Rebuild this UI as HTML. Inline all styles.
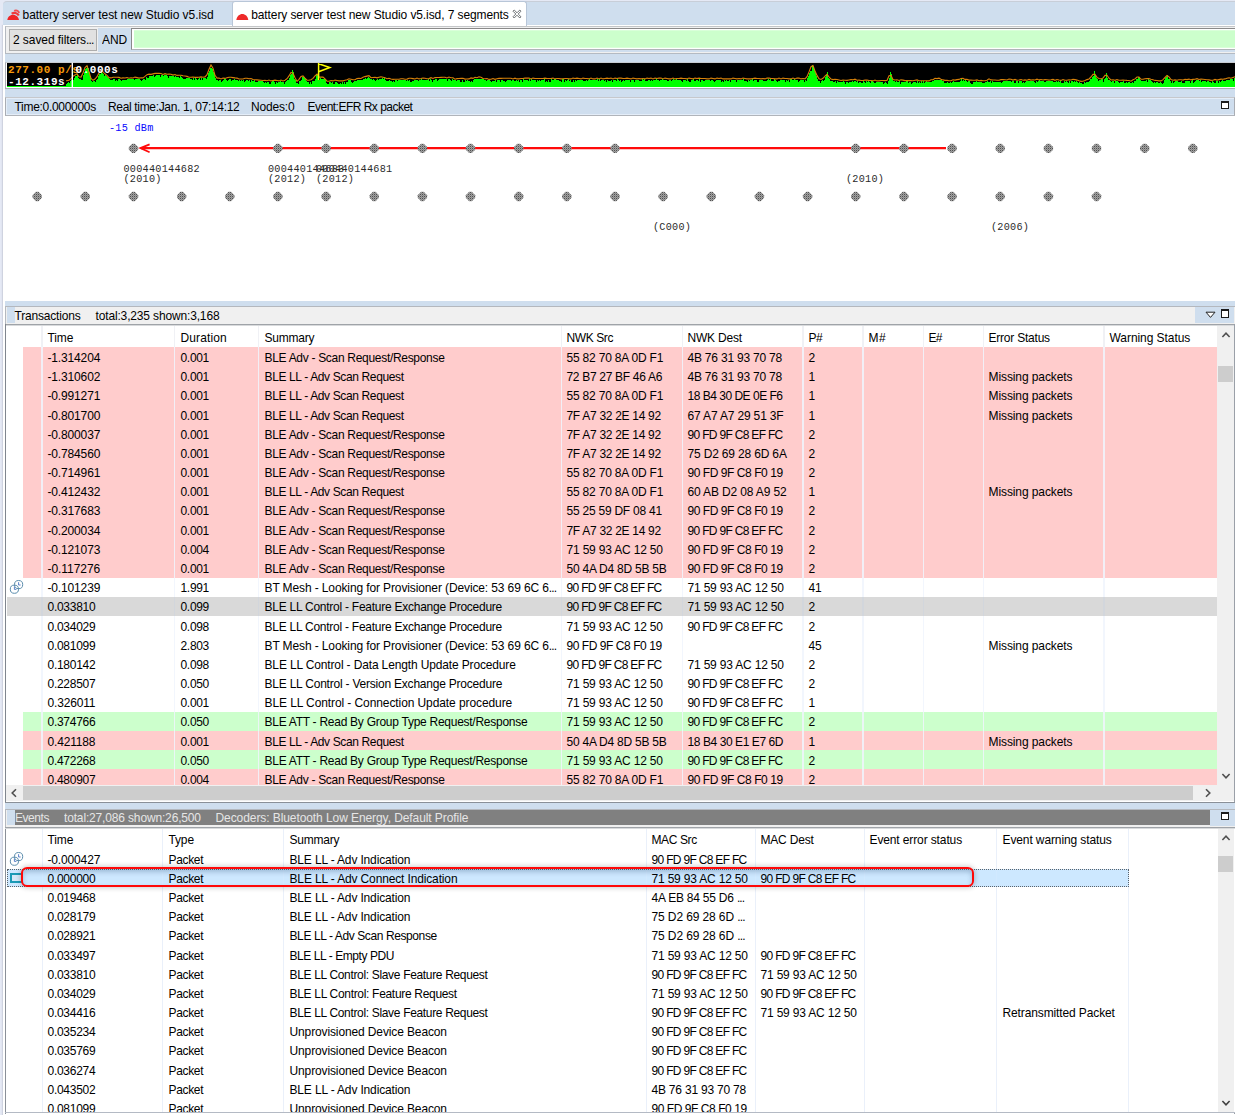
<!DOCTYPE html>
<html><head><meta charset="utf-8"><title>Network Analyzer</title>
<style>
*{box-sizing:border-box}
html,body{margin:0;padding:0}
body{width:1235px;height:1115px;position:relative;overflow:hidden;background:#e5e9f5;
 font-family:"Liberation Sans",sans-serif;font-size:12px;color:#000;}
.a{position:absolute}
.t{position:absolute;white-space:nowrap;line-height:16px;height:16px;transform:scaleY(1.05);transform-origin:0 50%}
.m{position:absolute;white-space:nowrap;font-family:"Liberation Mono",monospace;font-size:10.2px;letter-spacing:0.25px;line-height:10px;color:#2a2a2a}
.sep{position:absolute;width:1px;background:#fff}
.sepw{position:absolute;width:1px;background:#ecf2fb}
</style></head>
<body>
<div class="a" style="left:3px;top:1px;width:1232px;height:24.5px;background:#cfdeee;border-top-left-radius:4px;border-top:1px solid #c8ced8"></div>
<div class="a" style="left:2.5px;top:25px;width:1233px;height:1090px;background:#fff;box-shadow:-1px 0 1px rgba(120,125,140,0.2)"></div>
<div class="a" style="left:5px;top:27px;width:1230px;height:89px;background:#cfdeee;"></div>
<div class="a" style="left:232.3px;top:1.3px;width:295.2px;height:25px;background:#fff;border-radius:3px 3px 0 0;border:1px solid #b8c6d8;border-bottom:none"></div>
<svg class="a" style="left:7px;top:9px" width="14" height="12" viewBox="0 0 14 12"><path d="M0.3 11 C0.6 8 3 5.7 6 5.7 C9 5.7 11.6 8 12 11 Z" fill="#ee2628"/><path d="M4.6 4.6 C7 3.2 10.2 3.6 11.8 6.6" fill="none" stroke="#ef3a3c" stroke-width="2.2"/><path d="M7.2 1.9 C9 1 11.2 1.6 12.2 3.8" fill="none" stroke="#f04e50" stroke-width="1.9"/></svg>
<div class="t" style="left:22.6px;top:6.60px;letter-spacing:-0.067px;">battery server test new Studio v5.isd</div>
<svg class="a" style="left:235.8px;top:9px" width="14" height="12" viewBox="0 0 14 12"><path d="M0.3 11 C0.8 7.2 3.5 5 6.3 5 C9.1 5 11.8 7.2 12.3 11 Z" fill="#ee2a2a"/></svg>
<div class="t" style="left:251.2px;top:6.60px;letter-spacing:-0.093px;">battery server test new Studio v5.isd, 7 segments</div>
<svg class="a" style="left:512.3px;top:8.6px" width="10" height="10" viewBox="-1 -1 10 10"><path d="M0 1.2 L1.2 0 L4 2.8 L6.8 0 L8 1.2 L5.2 4 L8 6.8 L6.8 8 L4 5.2 L1.2 8 L0 6.8 L2.8 4 Z" stroke="#606468" stroke-width="0.9" fill="#fff"/></svg>
<div class="a" style="left:5px;top:26px;width:1230px;height:27.6px;background:#f0f0f0;border:1px solid #b4b9c0;border-right:none;border-top-color:#c4c6c8;border-bottom-color:#b4bac2"></div>
<div class="a" style="left:98px;top:28px;width:1137px;height:23.8px;background:#cfdeee;"></div>
<div class="a" style="left:9px;top:29.2px;width:87.6px;height:21.4px;background:#e1e1e1;border:1px solid #adadad"></div>
<div class="t" style="left:13px;top:32.40px;letter-spacing:-0.067px;">2 saved filters<span style="letter-spacing:-0.85px">...</span></div>
<div class="t" style="left:102px;top:32.40px;letter-spacing:-0.071px;">AND</div>
<div class="a" style="left:131.3px;top:28.3px;width:1104px;height:22.2px;background:#ccffcc;border:1px solid #8a8a8a;border-bottom-color:#b0b4b8;border-right:none;box-shadow:inset 2px 1.3px 0 #fff, inset 0 -1.3px 0 #fff"></div>
<div class="a" style="left:5px;top:61.5px;width:1230px;height:27.2px;background:#fff;border:1px solid #a8acb4;border-right:none;border-top-color:#c8ccd2"></div>
<div class="a" style="left:7px;top:62.6px;width:1228px;height:24.4px;background:#000;"></div>
<svg class="a" style="left:0;top:0" width="1235" height="90" viewBox="0 0 1235 90"><path d="M7 87 L7 83.9 L8 83.9 L8 83.4 L9 83.4 L9 84.2 L10 84.2 L10 82.9 L11 82.9 L11 83.2 L12 83.2 L12 85.4 L13 85.4 L13 83.2 L14 83.2 L14 83.9 L15 83.9 L15 82.9 L16 82.9 L16 85.4 L17 85.4 L17 83.6 L18 83.6 L18 82.9 L19 82.9 L19 83.2 L20 83.2 L20 84.2 L21 84.2 L21 84.2 L22 84.2 L22 83.2 L23 83.2 L23 83.6 L24 83.6 L24 83.2 L25 83.2 L25 85.4 L26 85.4 L26 84.2 L27 84.2 L27 82.9 L28 82.9 L28 83.2 L29 83.2 L29 83.6 L30 83.6 L30 82.9 L31 82.9 L31 84.2 L32 84.2 L32 82.9 L33 82.9 L33 83.6 L34 83.6 L34 82.9 L35 82.9 L35 85.4 L36 85.4 L36 83.4 L37 83.4 L37 83.6 L38 83.6 L38 84.2 L39 84.2 L39 83.4 L40 83.4 L40 85.4 L41 85.4 L41 83.2 L42 83.2 L42 83.6 L43 83.6 L43 85.4 L44 85.4 L44 83.4 L45 83.4 L45 83.2 L46 83.2 L46 83.6 L47 83.6 L47 83.9 L48 83.9 L48 83.2 L49 83.2 L49 85.4 L50 85.4 L50 83.2 L51 83.2 L51 82.9 L52 82.9 L52 83.6 L53 83.6 L53 84.8 L54 84.8 L54 85.4 L55 85.4 L55 84.2 L56 84.2 L56 83.9 L57 83.9 L57 84.8 L58 84.8 L58 84.8 L59 84.8 L59 83.9 L60 83.9 L60 83.6 L61 83.6 L61 83.3 L62 83.3 L62 82.9 L63 82.9 L63 82.8 L64 82.8 L64 82.2 L65 82.2 L65 82.3 L66 82.3 L66 83.9 L67 83.9 L67 83.0 L68 83.0 L68 81.9 L69 81.9 L69 82.5 L70 82.5 L70 81.1 L71 81.1 L71 79.5 L72 79.5 L72 78.3 L73 78.3 L73 79.5 L74 79.5 L74 77.5 L75 77.5 L75 75.9 L76 75.9 L76 75.9 L77 75.9 L77 73.9 L78 73.9 L78 77.8 L79 77.8 L79 78.7 L80 78.7 L80 78.5 L81 78.5 L81 80.0 L82 80.0 L82 79.5 L83 79.5 L83 75.4 L84 75.4 L84 72.4 L85 72.4 L85 69.4 L86 69.4 L86 67.6 L87 67.6 L87 65.8 L88 65.8 L88 68.4 L89 68.4 L89 72.0 L90 72.0 L90 77.1 L91 77.1 L91 81.0 L92 81.0 L92 82.0 L93 82.0 L93 81.2 L94 81.2 L94 81.4 L95 81.4 L95 82.1 L96 82.1 L96 79.7 L97 79.7 L97 78.5 L98 78.5 L98 76.4 L99 76.4 L99 73.8 L100 73.8 L100 74.2 L101 74.2 L101 71.7 L102 71.7 L102 72.5 L103 72.5 L103 73.7 L104 73.7 L104 76.0 L105 76.0 L105 74.7 L106 74.7 L106 76.1 L107 76.1 L107 77.3 L108 77.3 L108 78.4 L109 78.4 L109 78.8 L110 78.8 L110 79.7 L111 79.7 L111 79.7 L112 79.7 L112 80.4 L113 80.4 L113 78.8 L114 78.8 L114 79.0 L115 79.0 L115 80.5 L116 80.5 L116 79.9 L117 79.9 L117 81.1 L118 81.1 L118 79.4 L119 79.4 L119 79.2 L120 79.2 L120 80.0 L121 80.0 L121 81.3 L122 81.3 L122 79.5 L123 79.5 L123 80.1 L124 80.1 L124 79.9 L125 79.9 L125 80.2 L126 80.2 L126 79.5 L127 79.5 L127 79.3 L128 79.3 L128 79.0 L129 79.0 L129 79.2 L130 79.2 L130 79.1 L131 79.1 L131 79.3 L132 79.3 L132 79.2 L133 79.2 L133 78.5 L134 78.5 L134 80.3 L135 80.3 L135 78.9 L136 78.9 L136 79.1 L137 79.1 L137 79.2 L138 79.2 L138 78.5 L139 78.5 L139 79.1 L140 79.1 L140 79.9 L141 79.9 L141 81.2 L142 81.2 L142 79.7 L143 79.7 L143 79.4 L144 79.4 L144 78.7 L145 78.7 L145 80.4 L146 80.4 L146 77.0 L147 77.0 L147 77.9 L148 77.9 L148 77.6 L149 77.6 L149 76.3 L150 76.3 L150 76.3 L151 76.3 L151 76.2 L152 76.2 L152 76.1 L153 76.1 L153 75.1 L154 75.1 L154 76.6 L155 76.6 L155 76.0 L156 76.0 L156 74.7 L157 74.7 L157 75.4 L158 75.4 L158 75.0 L159 75.0 L159 75.4 L160 75.4 L160 76.6 L161 76.6 L161 75.3 L162 75.3 L162 75.1 L163 75.1 L163 75.9 L164 75.9 L164 75.0 L165 75.0 L165 75.3 L166 75.3 L166 75.1 L167 75.1 L167 75.7 L168 75.7 L168 77.8 L169 77.8 L169 75.6 L170 75.6 L170 76.4 L171 76.4 L171 75.5 L172 75.5 L172 75.8 L173 75.8 L173 76.3 L174 76.3 L174 77.0 L175 77.0 L175 76.3 L176 76.3 L176 76.5 L177 76.5 L177 76.9 L178 76.9 L178 77.0 L179 77.0 L179 78.0 L180 78.0 L180 76.4 L181 76.4 L181 76.5 L182 76.5 L182 78.2 L183 78.2 L183 78.5 L184 78.5 L184 78.9 L185 78.9 L185 79.2 L186 79.2 L186 78.4 L187 78.4 L187 78.0 L188 78.0 L188 78.2 L189 78.2 L189 78.1 L190 78.1 L190 78.8 L191 78.8 L191 78.5 L192 78.5 L192 79.7 L193 79.7 L193 78.4 L194 78.4 L194 80.4 L195 80.4 L195 77.9 L196 77.9 L196 78.6 L197 78.6 L197 80.4 L198 80.4 L198 78.8 L199 78.8 L199 78.3 L200 78.3 L200 80.3 L201 80.3 L201 77.8 L202 77.8 L202 80.3 L203 80.3 L203 78.4 L204 78.4 L204 78.0 L205 78.0 L205 78.4 L206 78.4 L206 79.3 L207 79.3 L207 76.9 L208 76.9 L208 73.4 L209 73.4 L209 70.9 L210 70.9 L210 68.2 L211 68.2 L211 67.7 L212 67.7 L212 68.6 L213 68.6 L213 71.8 L214 71.8 L214 74.0 L215 74.0 L215 78.0 L216 78.0 L216 80.1 L217 80.1 L217 80.1 L218 80.1 L218 80.7 L219 80.7 L219 80.1 L220 80.1 L220 80.1 L221 80.1 L221 81.9 L222 81.9 L222 81.3 L223 81.3 L223 80.4 L224 80.4 L224 79.4 L225 79.4 L225 79.4 L226 79.4 L226 79.9 L227 79.9 L227 80.9 L228 80.9 L228 79.5 L229 79.5 L229 79.3 L230 79.3 L230 79.4 L231 79.4 L231 80.5 L232 80.5 L232 79.7 L233 79.7 L233 79.9 L234 79.9 L234 79.4 L235 79.4 L235 79.9 L236 79.9 L236 79.7 L237 79.7 L237 80.1 L238 80.1 L238 81.3 L239 81.3 L239 80.2 L240 80.2 L240 80.5 L241 80.5 L241 80.2 L242 80.2 L242 81.4 L243 81.4 L243 79.5 L244 79.5 L244 81.5 L245 81.5 L245 80.6 L246 80.6 L246 79.9 L247 79.9 L247 79.9 L248 79.9 L248 81.0 L249 81.0 L249 80.4 L250 80.4 L250 81.6 L251 81.6 L251 80.3 L252 80.3 L252 81.2 L253 81.2 L253 81.0 L254 81.0 L254 80.4 L255 80.4 L255 81.5 L256 81.5 L256 82.2 L257 82.2 L257 81.7 L258 81.7 L258 80.8 L259 80.8 L259 81.1 L260 81.1 L260 81.2 L261 81.2 L261 81.3 L262 81.3 L262 80.9 L263 80.9 L263 81.5 L264 81.5 L264 82.9 L265 82.9 L265 81.6 L266 81.6 L266 83.0 L267 83.0 L267 82.2 L268 82.2 L268 81.8 L269 81.8 L269 83.8 L270 83.8 L270 83.9 L271 83.9 L271 81.9 L272 81.9 L272 81.4 L273 81.4 L273 81.4 L274 81.4 L274 81.7 L275 81.7 L275 83.9 L276 83.9 L276 81.9 L277 81.9 L277 82.7 L278 82.7 L278 82.1 L279 82.1 L279 82.1 L280 82.1 L280 81.4 L281 81.4 L281 82.1 L282 82.1 L282 82.1 L283 82.1 L283 82.1 L284 82.1 L284 83.9 L285 83.9 L285 82.1 L286 82.1 L286 81.4 L287 81.4 L287 80.1 L288 80.1 L288 80.4 L289 80.4 L289 77.7 L290 77.7 L290 75.4 L291 75.4 L291 73.7 L292 73.7 L292 70.0 L293 70.0 L293 72.3 L294 72.3 L294 78.9 L295 78.9 L295 80.2 L296 80.2 L296 83.4 L297 83.4 L297 83.4 L298 83.4 L298 84.1 L299 84.1 L299 80.7 L300 80.7 L300 81.4 L301 81.4 L301 80.3 L302 80.3 L302 76.6 L303 76.6 L303 77.4 L304 77.4 L304 77.6 L305 77.6 L305 78.6 L306 78.6 L306 80.5 L307 80.5 L307 81.8 L308 81.8 L308 82.3 L309 82.3 L309 83.5 L310 83.5 L310 81.6 L311 81.6 L311 83.6 L312 83.6 L312 80.9 L313 80.9 L313 80.7 L314 80.7 L314 81.0 L315 81.0 L315 79.4 L316 79.4 L316 73.9 L317 73.9 L317 73.7 L318 73.7 L318 76.8 L319 76.8 L319 80.2 L320 80.2 L320 78.4 L321 78.4 L321 79.1 L322 79.1 L322 79.1 L323 79.1 L323 79.1 L324 79.1 L324 78.4 L325 78.4 L325 80.0 L326 80.0 L326 83.4 L327 83.4 L327 84.1 L328 84.1 L328 84.4 L329 84.4 L329 81.7 L330 81.7 L330 81.7 L331 81.7 L331 83.3 L332 83.3 L332 82.4 L333 82.4 L333 83.9 L334 83.9 L334 83.9 L335 83.9 L335 82.1 L336 82.1 L336 82.1 L337 82.1 L337 83.3 L338 83.3 L338 83.9 L339 83.9 L339 83.9 L340 83.9 L340 83.3 L341 83.3 L341 83.9 L342 83.9 L342 82.1 L343 82.1 L343 83.9 L344 83.9 L344 82.1 L345 82.1 L345 83.9 L346 83.9 L346 81.5 L347 81.5 L347 82.0 L348 82.0 L348 80.0 L349 80.0 L349 80.2 L350 80.2 L350 79.9 L351 79.9 L351 81.5 L352 81.5 L352 82.8 L353 82.8 L353 81.7 L354 81.7 L354 80.8 L355 80.8 L355 81.0 L356 81.0 L356 81.4 L357 81.4 L357 80.2 L358 80.2 L358 80.4 L359 80.4 L359 80.2 L360 80.2 L360 79.6 L361 79.6 L361 79.5 L362 79.5 L362 79.8 L363 79.8 L363 79.1 L364 79.1 L364 79.1 L365 79.1 L365 78.4 L366 78.4 L366 79.4 L367 79.4 L367 77.7 L368 77.7 L368 76.8 L369 76.8 L369 78.0 L370 78.0 L370 79.3 L371 79.3 L371 78.7 L372 78.7 L372 79.6 L373 79.6 L373 79.3 L374 79.3 L374 80.0 L375 80.0 L375 81.1 L376 81.1 L376 79.8 L377 79.8 L377 79.4 L378 79.4 L378 79.6 L379 79.6 L379 78.9 L380 78.9 L380 79.1 L381 79.1 L381 79.0 L382 79.0 L382 78.2 L383 78.2 L383 79.1 L384 79.1 L384 78.4 L385 78.4 L385 79.6 L386 79.6 L386 81.4 L387 81.4 L387 81.0 L388 81.0 L388 81.3 L389 81.3 L389 79.6 L390 79.6 L390 81.2 L391 81.2 L391 80.9 L392 80.9 L392 82.4 L393 82.4 L393 80.5 L394 80.5 L394 82.3 L395 82.3 L395 80.1 L396 80.1 L396 80.1 L397 80.1 L397 80.5 L398 80.5 L398 80.1 L399 80.1 L399 80.0 L400 80.0 L400 80.4 L401 80.4 L401 80.4 L402 80.4 L402 79.7 L403 79.7 L403 80.2 L404 80.2 L404 80.4 L405 80.4 L405 80.1 L406 80.1 L406 80.9 L407 80.9 L407 80.3 L408 80.3 L408 80.9 L409 80.9 L409 80.1 L410 80.1 L410 82.1 L411 82.1 L411 82.0 L412 82.0 L412 81.4 L413 81.4 L413 80.5 L414 80.5 L414 79.8 L415 79.8 L415 80.2 L416 80.2 L416 79.5 L417 79.5 L417 79.9 L418 79.9 L418 80.7 L419 80.7 L419 79.7 L420 79.7 L420 80.1 L421 80.1 L421 79.4 L422 79.4 L422 79.6 L423 79.6 L423 80.0 L424 80.0 L424 79.6 L425 79.6 L425 79.9 L426 79.9 L426 79.5 L427 79.5 L427 79.9 L428 79.9 L428 79.4 L429 79.4 L429 81.0 L430 81.0 L430 79.1 L431 79.1 L431 80.0 L432 80.0 L432 81.5 L433 81.5 L433 80.3 L434 80.3 L434 79.6 L435 79.6 L435 79.4 L436 79.4 L436 78.9 L437 78.9 L437 81.3 L438 81.3 L438 79.5 L439 79.5 L439 79.1 L440 79.1 L440 79.2 L441 79.2 L441 79.4 L442 79.4 L442 78.7 L443 78.7 L443 79.1 L444 79.1 L444 79.3 L445 79.3 L445 79.3 L446 79.3 L446 79.2 L447 79.2 L447 81.0 L448 81.0 L448 79.2 L449 79.2 L449 79.1 L450 79.1 L450 80.3 L451 80.3 L451 81.1 L452 81.1 L452 79.4 L453 79.4 L453 79.8 L454 79.8 L454 80.4 L455 80.4 L455 79.6 L456 79.6 L456 80.6 L457 80.6 L457 79.9 L458 79.9 L458 79.8 L459 79.8 L459 79.8 L460 79.8 L460 82.3 L461 82.3 L461 82.2 L462 82.2 L462 80.4 L463 80.4 L463 82.1 L464 82.1 L464 81.5 L465 81.5 L465 80.3 L466 80.3 L466 81.4 L467 81.4 L467 79.8 L468 79.8 L468 80.8 L469 80.8 L469 81.3 L470 81.3 L470 81.9 L471 81.9 L471 80.5 L472 80.5 L472 81.6 L473 81.6 L473 79.6 L474 79.6 L474 79.4 L475 79.4 L475 79.3 L476 79.3 L476 79.4 L477 79.4 L477 78.9 L478 78.9 L478 78.6 L479 78.6 L479 79.2 L480 79.2 L480 79.2 L481 79.2 L481 78.5 L482 78.5 L482 79.3 L483 79.3 L483 79.0 L484 79.0 L484 79.6 L485 79.6 L485 80.3 L486 80.3 L486 81.2 L487 81.2 L487 80.4 L488 80.4 L488 79.9 L489 79.9 L489 80.2 L490 80.2 L490 81.1 L491 81.1 L491 82.3 L492 82.3 L492 80.5 L493 80.5 L493 80.5 L494 80.5 L494 80.5 L495 80.5 L495 79.8 L496 79.8 L496 81.7 L497 81.7 L497 80.2 L498 80.2 L498 80.2 L499 80.2 L499 80.4 L500 80.4 L500 81.6 L501 81.6 L501 79.7 L502 79.7 L502 80.4 L503 80.4 L503 80.6 L504 80.6 L504 80.6 L505 80.6 L505 82.1 L506 82.1 L506 80.6 L507 80.6 L507 80.3 L508 80.3 L508 79.6 L509 79.6 L509 80.3 L510 80.3 L510 80.2 L511 80.2 L511 80.5 L512 80.5 L512 80.0 L513 80.0 L513 79.5 L514 79.5 L514 80.5 L515 80.5 L515 80.8 L516 80.8 L516 79.8 L517 79.8 L517 81.3 L518 81.3 L518 80.1 L519 80.1 L519 81.9 L520 81.9 L520 80.1 L521 80.1 L521 80.1 L522 80.1 L522 81.9 L523 81.9 L523 79.4 L524 79.4 L524 79.7 L525 79.7 L525 80.1 L526 80.1 L526 79.7 L527 79.7 L527 79.9 L528 79.9 L528 80.7 L529 80.7 L529 79.4 L530 79.4 L530 80.7 L531 80.7 L531 79.4 L532 79.4 L532 80.1 L533 80.1 L533 80.1 L534 80.1 L534 80.1 L535 80.1 L535 79.7 L536 79.7 L536 81.9 L537 81.9 L537 79.9 L538 79.9 L538 80.7 L539 80.7 L539 80.4 L540 80.4 L540 81.3 L541 81.3 L541 79.9 L542 79.9 L542 80.1 L543 80.1 L543 79.9 L544 79.9 L544 79.4 L545 79.4 L545 81.9 L546 81.9 L546 80.7 L547 80.7 L547 81.9 L548 81.9 L548 79.9 L549 79.9 L549 81.9 L550 81.9 L550 81.9 L551 81.9 L551 79.4 L552 79.4 L552 80.1 L553 80.1 L553 79.7 L554 79.7 L554 79.4 L555 79.4 L555 79.4 L556 79.4 L556 79.9 L557 79.9 L557 80.4 L558 80.4 L558 79.7 L559 79.7 L559 80.7 L560 80.7 L560 81.3 L561 81.3 L561 81.9 L562 81.9 L562 79.4 L563 79.4 L563 79.4 L564 79.4 L564 81.9 L565 81.9 L565 80.1 L566 80.1 L566 81.3 L567 81.3 L567 80.1 L568 80.1 L568 79.4 L569 79.4 L569 81.3 L570 81.3 L570 79.7 L571 79.7 L571 81.9 L572 81.9 L572 81.9 L573 81.9 L573 79.7 L574 79.7 L574 81.9 L575 81.9 L575 79.7 L576 79.7 L576 81.3 L577 81.3 L577 80.1 L578 80.1 L578 79.7 L579 79.7 L579 80.1 L580 80.1 L580 80.1 L581 80.1 L581 80.1 L582 80.1 L582 80.1 L583 80.1 L583 81.3 L584 81.3 L584 81.3 L585 81.3 L585 80.7 L586 80.7 L586 79.7 L587 79.7 L587 81.3 L588 81.3 L588 80.1 L589 80.1 L589 79.4 L590 79.4 L590 80.1 L591 80.1 L591 79.7 L592 79.7 L592 79.9 L593 79.9 L593 80.4 L594 80.4 L594 80.1 L595 80.1 L595 80.1 L596 80.1 L596 79.9 L597 79.9 L597 79.4 L598 79.4 L598 81.3 L599 81.3 L599 79.4 L600 79.4 L600 81.3 L601 81.3 L601 80.1 L602 80.1 L602 79.7 L603 79.7 L603 80.1 L604 80.1 L604 81.3 L605 81.3 L605 80.1 L606 80.1 L606 81.9 L607 81.9 L607 80.1 L608 80.1 L608 81.3 L609 81.3 L609 81.3 L610 81.3 L610 81.3 L611 81.3 L611 79.7 L612 79.7 L612 81.9 L613 81.9 L613 80.1 L614 80.1 L614 80.1 L615 80.1 L615 79.7 L616 79.7 L616 81.3 L617 81.3 L617 79.4 L618 79.4 L618 80.1 L619 80.1 L619 81.3 L620 81.3 L620 79.7 L621 79.7 L621 81.9 L622 81.9 L622 81.3 L623 81.3 L623 80.1 L624 80.1 L624 80.7 L625 80.7 L625 80.1 L626 80.1 L626 80.1 L627 80.1 L627 79.7 L628 79.7 L628 79.7 L629 79.7 L629 79.9 L630 79.9 L630 81.9 L631 81.9 L631 80.1 L632 80.1 L632 80.4 L633 80.4 L633 79.9 L634 79.9 L634 81.9 L635 81.9 L635 80.1 L636 80.1 L636 79.7 L637 79.7 L637 80.4 L638 80.4 L638 80.1 L639 80.1 L639 81.3 L640 81.3 L640 81.3 L641 81.3 L641 80.7 L642 80.7 L642 79.4 L643 79.4 L643 79.9 L644 79.9 L644 79.4 L645 79.4 L645 81.3 L646 81.3 L646 81.3 L647 81.3 L647 80.7 L648 80.7 L648 80.1 L649 80.1 L649 79.9 L650 79.9 L650 80.7 L651 80.7 L651 80.4 L652 80.4 L652 80.7 L653 80.7 L653 80.4 L654 80.4 L654 79.7 L655 79.7 L655 80.4 L656 80.4 L656 79.4 L657 79.4 L657 80.4 L658 80.4 L658 80.4 L659 80.4 L659 80.7 L660 80.7 L660 79.7 L661 79.7 L661 80.1 L662 80.1 L662 79.4 L663 79.4 L663 80.1 L664 80.1 L664 80.1 L665 80.1 L665 80.4 L666 80.4 L666 79.7 L667 79.7 L667 80.7 L668 80.7 L668 80.7 L669 80.7 L669 79.7 L670 79.7 L670 80.4 L671 80.4 L671 80.7 L672 80.7 L672 80.1 L673 80.1 L673 79.4 L674 79.4 L674 80.1 L675 80.1 L675 79.7 L676 79.7 L676 79.4 L677 79.4 L677 80.1 L678 80.1 L678 79.9 L679 79.9 L679 80.1 L680 80.1 L680 80.1 L681 80.1 L681 80.7 L682 80.7 L682 81.9 L683 81.9 L683 80.4 L684 80.4 L684 80.1 L685 80.1 L685 80.4 L686 80.4 L686 80.7 L687 80.7 L687 79.4 L688 79.4 L688 80.7 L689 80.7 L689 81.9 L690 81.9 L690 81.9 L691 81.9 L691 80.1 L692 80.1 L692 79.7 L693 79.7 L693 79.4 L694 79.4 L694 80.7 L695 80.7 L695 81.3 L696 81.3 L696 79.9 L697 79.9 L697 80.1 L698 80.1 L698 81.3 L699 81.3 L699 79.4 L700 79.4 L700 81.9 L701 81.9 L701 79.9 L702 79.9 L702 79.9 L703 79.9 L703 81.3 L704 81.3 L704 80.7 L705 80.7 L705 80.4 L706 80.4 L706 80.1 L707 80.1 L707 80.1 L708 80.1 L708 80.1 L709 80.1 L709 80.1 L710 80.1 L710 80.7 L711 80.7 L711 80.1 L712 80.1 L712 80.1 L713 80.1 L713 81.3 L714 81.3 L714 81.9 L715 81.9 L715 80.7 L716 80.7 L716 79.7 L717 79.7 L717 79.9 L718 79.9 L718 79.9 L719 79.9 L719 79.7 L720 79.7 L720 80.1 L721 80.1 L721 81.9 L722 81.9 L722 81.3 L723 81.3 L723 81.9 L724 81.9 L724 80.1 L725 80.1 L725 81.3 L726 81.3 L726 80.4 L727 80.4 L727 81.3 L728 81.3 L728 80.7 L729 80.7 L729 79.9 L730 79.9 L730 81.9 L731 81.9 L731 80.1 L732 80.1 L732 80.1 L733 80.1 L733 79.7 L734 79.7 L734 79.9 L735 79.9 L735 80.4 L736 80.4 L736 81.9 L737 81.9 L737 79.7 L738 79.7 L738 80.4 L739 80.4 L739 80.1 L740 80.1 L740 80.4 L741 80.4 L741 80.1 L742 80.1 L742 80.1 L743 80.1 L743 79.4 L744 79.4 L744 80.7 L745 80.7 L745 80.7 L746 80.7 L746 80.7 L747 80.7 L747 81.9 L748 81.9 L748 80.1 L749 80.1 L749 80.7 L750 80.7 L750 80.1 L751 80.1 L751 80.4 L752 80.4 L752 79.4 L753 79.4 L753 81.3 L754 81.3 L754 80.1 L755 80.1 L755 80.4 L756 80.4 L756 79.9 L757 79.9 L757 81.9 L758 81.9 L758 81.9 L759 81.9 L759 80.1 L760 80.1 L760 79.7 L761 79.7 L761 80.1 L762 80.1 L762 80.1 L763 80.1 L763 80.7 L764 80.7 L764 80.7 L765 80.7 L765 81.3 L766 81.3 L766 80.7 L767 80.7 L767 80.1 L768 80.1 L768 79.4 L769 79.4 L769 79.9 L770 79.9 L770 79.4 L771 79.4 L771 80.7 L772 80.7 L772 81.3 L773 81.3 L773 81.3 L774 81.3 L774 79.4 L775 79.4 L775 79.7 L776 79.7 L776 80.7 L777 80.7 L777 81.9 L778 81.9 L778 81.3 L779 81.3 L779 81.3 L780 81.3 L780 80.1 L781 80.1 L781 79.7 L782 79.7 L782 80.1 L783 80.1 L783 79.9 L784 79.9 L784 79.9 L785 79.9 L785 81.9 L786 81.9 L786 79.7 L787 79.7 L787 81.3 L788 81.3 L788 79.7 L789 79.7 L789 81.9 L790 81.9 L790 79.4 L791 79.4 L791 79.4 L792 79.4 L792 79.9 L793 79.9 L793 80.1 L794 80.1 L794 79.4 L795 79.4 L795 80.1 L796 80.1 L796 79.9 L797 79.9 L797 80.1 L798 80.1 L798 81.9 L799 81.9 L799 80.7 L800 80.7 L800 79.7 L801 79.7 L801 79.7 L802 79.7 L802 79.7 L803 79.7 L803 80.1 L804 80.1 L804 81.9 L805 81.9 L805 80.1 L806 80.1 L806 80.7 L807 80.7 L807 77.9 L808 77.9 L808 75.8 L809 75.8 L809 72.9 L810 72.9 L810 70.5 L811 70.5 L811 70.5 L812 70.5 L812 64.8 L813 64.8 L813 66.3 L814 66.3 L814 69.6 L815 69.6 L815 72.9 L816 72.9 L816 75.6 L817 75.6 L817 78.6 L818 78.6 L818 81.1 L819 81.1 L819 81.1 L820 81.1 L820 82.7 L821 82.7 L821 80.7 L822 80.7 L822 79.8 L823 79.8 L823 80.9 L824 80.9 L824 80.1 L825 80.1 L825 77.4 L826 77.4 L826 75.4 L827 75.4 L827 72.1 L828 72.1 L828 77.6 L829 77.6 L829 79.4 L830 79.4 L830 80.7 L831 80.7 L831 81.1 L832 81.1 L832 81.2 L833 81.2 L833 81.8 L834 81.8 L834 81.6 L835 81.6 L835 81.3 L836 81.3 L836 82.6 L837 82.6 L837 80.7 L838 80.7 L838 81.8 L839 81.8 L839 82.1 L840 82.1 L840 81.9 L841 81.9 L841 82.2 L842 82.2 L842 81.7 L843 81.7 L843 81.0 L844 81.0 L844 81.8 L845 81.8 L845 83.6 L846 83.6 L846 81.5 L847 81.5 L847 81.9 L848 81.9 L848 83.2 L849 83.2 L849 82.0 L850 82.0 L850 82.1 L851 82.1 L851 81.6 L852 81.6 L852 81.1 L853 81.1 L853 81.8 L854 81.8 L854 80.9 L855 80.9 L855 81.2 L856 81.2 L856 81.5 L857 81.5 L857 81.4 L858 81.4 L858 83.3 L859 83.3 L859 81.9 L860 81.9 L860 82.1 L861 82.1 L861 83.3 L862 83.3 L862 82.7 L863 82.7 L863 81.4 L864 81.4 L864 81.9 L865 81.9 L865 82.7 L866 82.7 L866 81.4 L867 81.4 L867 82.1 L868 82.1 L868 81.4 L869 81.4 L869 81.9 L870 81.9 L870 82.7 L871 82.7 L871 81.4 L872 81.4 L872 81.4 L873 81.4 L873 81.9 L874 81.9 L874 82.7 L875 82.7 L875 83.3 L876 83.3 L876 82.4 L877 82.4 L877 81.7 L878 81.7 L878 81.7 L879 81.7 L879 81.9 L880 81.9 L880 82.4 L881 82.4 L881 82.1 L882 82.1 L882 81.9 L883 81.9 L883 83.9 L884 83.9 L884 83.3 L885 83.3 L885 81.9 L886 81.9 L886 83.1 L887 83.1 L887 84.2 L888 84.2 L888 80.7 L889 80.7 L889 77.6 L890 77.6 L890 72.3 L891 72.3 L891 74.4 L892 74.4 L892 78.7 L893 78.7 L893 80.9 L894 80.9 L894 81.2 L895 81.2 L895 81.6 L896 81.6 L896 81.2 L897 81.2 L897 82.0 L898 82.0 L898 82.3 L899 82.3 L899 81.3 L900 81.3 L900 83.5 L901 83.5 L901 81.7 L902 81.7 L902 82.3 L903 82.3 L903 82.0 L904 82.0 L904 81.7 L905 81.7 L905 82.4 L906 82.4 L906 81.4 L907 81.4 L907 81.1 L908 81.1 L908 83.0 L909 83.0 L909 81.8 L910 81.8 L910 82.1 L911 82.1 L911 83.6 L912 83.6 L912 83.1 L913 83.1 L913 81.9 L914 81.9 L914 82.2 L915 82.2 L915 82.2 L916 82.2 L916 83.1 L917 83.1 L917 81.2 L918 81.2 L918 82.5 L919 82.5 L919 82.0 L920 82.0 L920 82.6 L921 82.6 L921 81.3 L922 81.3 L922 82.6 L923 82.6 L923 81.3 L924 81.3 L924 83.2 L925 83.2 L925 81.6 L926 81.6 L926 81.3 L927 81.3 L927 82.1 L928 82.1 L928 82.1 L929 82.1 L929 81.7 L930 81.7 L930 82.4 L931 82.4 L931 82.0 L932 82.0 L932 81.4 L933 81.4 L933 81.3 L934 81.3 L934 80.0 L935 80.0 L935 80.3 L936 80.3 L936 80.3 L937 80.3 L937 79.6 L938 79.6 L938 79.9 L939 79.9 L939 79.5 L940 79.5 L940 80.1 L941 80.1 L941 80.1 L942 80.1 L942 81.2 L943 81.2 L943 81.1 L944 81.1 L944 83.0 L945 83.0 L945 83.3 L946 83.3 L946 82.7 L947 82.7 L947 82.0 L948 82.0 L948 82.6 L949 82.6 L949 83.1 L950 83.1 L950 81.7 L951 81.7 L951 83.1 L952 83.1 L952 81.6 L953 81.6 L953 81.1 L954 81.1 L954 81.8 L955 81.8 L955 81.5 L956 81.5 L956 81.7 L957 81.7 L957 81.9 L958 81.9 L958 81.9 L959 81.9 L959 82.2 L960 82.2 L960 80.6 L961 80.6 L961 79.3 L962 79.3 L962 80.9 L963 80.9 L963 79.6 L964 79.6 L964 80.7 L965 80.7 L965 80.4 L966 80.4 L966 81.1 L967 81.1 L967 82.2 L968 82.2 L968 81.2 L969 81.2 L969 81.0 L970 81.0 L970 82.9 L971 82.9 L971 83.5 L972 83.5 L972 83.5 L973 83.5 L973 82.1 L974 82.1 L974 81.6 L975 81.6 L975 82.4 L976 82.4 L976 81.4 L977 81.4 L977 81.5 L978 81.5 L978 81.9 L979 81.9 L979 81.5 L980 81.5 L980 82.0 L981 82.0 L981 81.6 L982 81.6 L982 82.6 L983 82.6 L983 83.2 L984 83.2 L984 83.3 L985 83.3 L985 81.9 L986 81.9 L986 81.7 L987 81.7 L987 81.1 L988 81.1 L988 81.6 L989 81.6 L989 81.8 L990 81.8 L990 80.8 L991 80.8 L991 82.9 L992 82.9 L992 80.9 L993 80.9 L993 81.6 L994 81.6 L994 81.8 L995 81.8 L995 82.1 L996 82.1 L996 82.0 L997 82.0 L997 82.2 L998 82.2 L998 81.9 L999 81.9 L999 81.8 L1000 81.8 L1000 81.7 L1001 81.7 L1001 82.8 L1002 82.8 L1002 81.6 L1003 81.6 L1003 81.3 L1004 81.3 L1004 81.4 L1005 81.4 L1005 81.3 L1006 81.3 L1006 81.1 L1007 81.1 L1007 81.2 L1008 81.2 L1008 81.1 L1009 81.1 L1009 81.4 L1010 81.4 L1010 80.8 L1011 80.8 L1011 81.8 L1012 81.8 L1012 81.3 L1013 81.3 L1013 81.3 L1014 81.3 L1014 83.1 L1015 83.1 L1015 83.2 L1016 83.2 L1016 81.4 L1017 81.4 L1017 81.1 L1018 81.1 L1018 82.7 L1019 82.7 L1019 80.9 L1020 80.9 L1020 81.2 L1021 81.2 L1021 80.9 L1022 80.9 L1022 82.8 L1023 82.8 L1023 81.5 L1024 81.5 L1024 82.7 L1025 82.7 L1025 81.8 L1026 81.8 L1026 80.7 L1027 80.7 L1027 81.4 L1028 81.4 L1028 81.4 L1029 81.4 L1029 81.0 L1030 81.0 L1030 80.6 L1031 80.6 L1031 81.3 L1032 81.3 L1032 81.3 L1033 81.3 L1033 80.9 L1034 80.9 L1034 81.5 L1035 81.5 L1035 83.0 L1036 83.0 L1036 81.0 L1037 81.0 L1037 82.4 L1038 82.4 L1038 81.1 L1039 81.1 L1039 80.4 L1040 80.4 L1040 80.7 L1041 80.7 L1041 81.4 L1042 81.4 L1042 81.1 L1043 81.1 L1043 80.5 L1044 80.5 L1044 81.5 L1045 81.5 L1045 81.5 L1046 81.5 L1046 81.0 L1047 81.0 L1047 80.6 L1048 80.6 L1048 81.3 L1049 81.3 L1049 81.3 L1050 81.3 L1050 80.6 L1051 80.6 L1051 81.4 L1052 81.4 L1052 80.7 L1053 80.7 L1053 81.7 L1054 81.7 L1054 82.0 L1055 82.0 L1055 81.8 L1056 81.8 L1056 81.3 L1057 81.3 L1057 81.5 L1058 81.5 L1058 81.1 L1059 81.1 L1059 81.6 L1060 81.6 L1060 80.9 L1061 80.9 L1061 82.8 L1062 82.8 L1062 83.3 L1063 83.3 L1063 82.7 L1064 82.7 L1064 81.1 L1065 81.1 L1065 82.0 L1066 82.0 L1066 81.0 L1067 81.0 L1067 82.0 L1068 82.0 L1068 83.1 L1069 83.1 L1069 81.1 L1070 81.1 L1070 83.1 L1071 83.1 L1071 80.8 L1072 80.8 L1072 81.0 L1073 81.0 L1073 81.8 L1074 81.8 L1074 81.1 L1075 81.1 L1075 81.7 L1076 81.7 L1076 81.4 L1077 81.4 L1077 81.7 L1078 81.7 L1078 82.6 L1079 82.6 L1079 81.6 L1080 81.6 L1080 82.7 L1081 82.7 L1081 83.3 L1082 83.3 L1082 83.9 L1083 83.9 L1083 84.2 L1084 84.2 L1084 82.4 L1085 82.4 L1085 82.9 L1086 82.9 L1086 82.1 L1087 82.1 L1087 82.2 L1088 82.2 L1088 81.7 L1089 81.7 L1089 80.6 L1090 80.6 L1090 79.4 L1091 79.4 L1091 79.2 L1092 79.2 L1092 76.9 L1093 76.9 L1093 76.2 L1094 76.2 L1094 70.7 L1095 70.7 L1095 75.2 L1096 75.2 L1096 77.7 L1097 77.7 L1097 78.9 L1098 78.9 L1098 81.3 L1099 81.3 L1099 79.9 L1100 79.9 L1100 79.9 L1101 79.9 L1101 79.4 L1102 79.4 L1102 79.4 L1103 79.4 L1103 81.9 L1104 81.9 L1104 78.6 L1105 78.6 L1105 78.0 L1106 78.0 L1106 73.2 L1107 73.2 L1107 77.6 L1108 77.6 L1108 80.4 L1109 80.4 L1109 79.6 L1110 79.6 L1110 80.9 L1111 80.9 L1111 81.5 L1112 81.5 L1112 81.2 L1113 81.2 L1113 81.1 L1114 81.1 L1114 83.2 L1115 83.2 L1115 81.3 L1116 81.3 L1116 81.1 L1117 81.1 L1117 81.2 L1118 81.2 L1118 82.3 L1119 82.3 L1119 83.0 L1120 83.0 L1120 81.8 L1121 81.8 L1121 81.9 L1122 81.9 L1122 81.8 L1123 81.8 L1123 81.4 L1124 81.4 L1124 83.3 L1125 83.3 L1125 82.5 L1126 82.5 L1126 81.6 L1127 81.6 L1127 83.0 L1128 83.0 L1128 82.0 L1129 82.0 L1129 82.3 L1130 82.3 L1130 82.6 L1131 82.6 L1131 82.9 L1132 82.9 L1132 82.1 L1133 82.1 L1133 83.0 L1134 83.0 L1134 81.4 L1135 81.4 L1135 80.5 L1136 80.5 L1136 78.6 L1137 78.6 L1137 78.8 L1138 78.8 L1138 76.9 L1139 76.9 L1139 78.0 L1140 78.0 L1140 79.9 L1141 79.9 L1141 80.8 L1142 80.8 L1142 81.2 L1143 81.2 L1143 81.1 L1144 81.1 L1144 81.0 L1145 81.0 L1145 80.7 L1146 80.7 L1146 79.8 L1147 79.8 L1147 82.0 L1148 82.0 L1148 79.2 L1149 79.2 L1149 79.9 L1150 79.9 L1150 79.6 L1151 79.6 L1151 81.0 L1152 81.0 L1152 82.0 L1153 82.0 L1153 83.1 L1154 83.1 L1154 81.7 L1155 81.7 L1155 82.7 L1156 82.7 L1156 82.1 L1157 82.1 L1157 82.1 L1158 82.1 L1158 82.7 L1159 82.7 L1159 82.7 L1160 82.7 L1160 82.4 L1161 82.4 L1161 83.3 L1162 83.3 L1162 83.9 L1163 83.9 L1163 83.3 L1164 83.3 L1164 80.4 L1165 80.4 L1165 78.4 L1166 78.4 L1166 76.9 L1167 76.9 L1167 74.8 L1168 74.8 L1168 78.7 L1169 78.7 L1169 78.8 L1170 78.8 L1170 81.4 L1171 81.4 L1171 82.8 L1172 82.8 L1172 81.4 L1173 81.4 L1173 82.7 L1174 82.7 L1174 82.1 L1175 82.1 L1175 81.1 L1176 81.1 L1176 81.1 L1177 81.1 L1177 81.2 L1178 81.2 L1178 81.7 L1179 81.7 L1179 82.0 L1180 82.0 L1180 81.7 L1181 81.7 L1181 80.9 L1182 80.9 L1182 82.5 L1183 82.5 L1183 83.1 L1184 83.1 L1184 83.1 L1185 83.1 L1185 80.5 L1186 80.5 L1186 80.5 L1187 80.5 L1187 81.0 L1188 81.0 L1188 80.8 L1189 80.8 L1189 81.4 L1190 81.4 L1190 82.9 L1191 82.9 L1191 80.6 L1192 80.6 L1192 80.3 L1193 80.3 L1193 82.7 L1194 82.7 L1194 81.5 L1195 81.5 L1195 80.6 L1196 80.6 L1196 80.1 L1197 80.1 L1197 80.3 L1198 80.3 L1198 80.3 L1199 80.3 L1199 80.6 L1200 80.6 L1200 80.4 L1201 80.4 L1201 81.9 L1202 81.9 L1202 80.8 L1203 80.8 L1203 80.7 L1204 80.7 L1204 81.0 L1205 81.0 L1205 80.7 L1206 80.7 L1206 81.5 L1207 81.5 L1207 81.3 L1208 81.3 L1208 81.2 L1209 81.2 L1209 81.8 L1210 81.8 L1210 81.6 L1211 81.6 L1211 82.8 L1212 82.8 L1212 81.3 L1213 81.3 L1213 81.5 L1214 81.5 L1214 83.2 L1215 83.2 L1215 82.6 L1216 82.6 L1216 81.3 L1217 81.3 L1217 81.3 L1218 81.3 L1218 83.1 L1219 83.1 L1219 81.2 L1220 81.2 L1220 81.5 L1221 81.5 L1221 81.4 L1222 81.4 L1222 80.4 L1223 80.4 L1223 80.9 L1224 80.9 L1224 80.5 L1225 80.5 L1225 81.1 L1226 81.1 L1226 80.1 L1227 80.1 L1227 80.2 L1228 80.2 L1228 80.3 L1229 80.3 L1229 80.4 L1230 80.4 L1230 79.4 L1231 79.4 L1231 79.4 L1232 79.4 L1232 78.8 L1233 78.8 L1233 80.8 L1234 80.8 L1234 78.1 L1235 78.1 L1235 78.9 L1236 78.9 L1235 87 Z" fill="#00ff00" shape-rendering="crispEdges"/><path d="M7 80.3 L9 82.4 L11 82.4 L13 82.4 L15 82.4 L17 81.6 L19 82.0 L21 82.4 L23 82.4 L25 82.0 L27 82.4 L29 82.0 L31 82.0 L33 82.0 L35 82.0 L37 82.4 L39 81.6 L41 82.0 L43 82.0 L45 81.6 L47 82.0 L49 81.6 L51 81.6 L53 82.4 L55 82.4 L57 81.6 L59 82.0 L61 82.2 L63 81.2 L65 80.8 L67 80.7 L69 80.2 L71 78.7 L73 76.2 L75 75.0 L77 73.8 L79 76.8 L81 77.1 L83 73.0 L85 67.5 L87 65.8 L89 71.6 L91 78.5 L93 80.3 L95 79.0 L97 76.7 L99 72.9 L101 70.4 L103 71.9 L105 73.8 L107 75.3 L109 77.7 L111 77.9 L113 77.2 L115 77.3 L117 77.3 L119 77.4 L121 78.3 L123 77.9 L125 78.0 L127 77.5 L129 78.2 L131 77.7 L133 78.0 L135 77.1 L137 77.6 L139 78.1 L141 77.8 L143 77.9 L145 76.4 L147 74.7 L149 74.1 L151 74.4 L153 73.9 L155 73.4 L157 73.4 L159 73.4 L161 73.5 L163 74.4 L165 73.7 L167 74.3 L169 74.0 L171 74.2 L173 75.1 L175 74.5 L177 75.4 L179 75.2 L181 75.3 L183 75.8 L185 76.0 L187 76.4 L189 77.3 L191 77.3 L193 77.0 L195 77.4 L197 77.4 L199 77.3 L201 76.9 L203 77.2 L205 76.9 L207 74.7 L209 69.2 L211 65.0 L213 68.2 L215 75.3 L217 78.1 L219 78.1 L221 78.9 L223 78.1 L225 78.4 L227 77.7 L229 77.3 L231 77.3 L233 77.6 L235 77.9 L237 78.1 L239 79.0 L241 79.0 L243 79.0 L245 78.3 L247 78.3 L249 78.8 L251 78.5 L253 79.5 L255 79.7 L257 79.9 L259 80.1 L261 80.3 L263 80.5 L265 80.2 L267 80.7 L269 80.0 L271 80.9 L273 80.5 L275 80.1 L277 80.5 L279 80.9 L281 80.1 L283 80.9 L285 80.2 L287 78.7 L289 75.9 L291 72.4 L293 73.2 L295 77.8 L297 81.3 L299 79.3 L301 76.5 L303 75.9 L305 78.1 L307 80.1 L309 80.3 L311 79.8 L313 78.4 L315 75.9 L317 74.1 L319 77.1 L321 77.1 L323 77.1 L325 78.8 L327 81.2 L329 81.2 L331 80.5 L333 80.9 L335 80.1 L337 80.5 L339 80.9 L341 80.9 L343 80.9 L345 80.3 L347 79.7 L349 78.8 L351 79.3 L353 79.8 L355 79.8 L357 78.6 L359 78.2 L361 78.5 L363 77.3 L365 76.6 L367 76.1 L369 75.6 L371 77.7 L373 77.5 L375 77.3 L377 77.9 L379 77.3 L381 76.7 L383 77.2 L385 77.8 L387 78.7 L389 78.3 L391 79.0 L393 79.4 L395 79.3 L397 79.3 L399 79.2 L401 78.8 L403 78.8 L405 79.2 L407 79.1 L409 78.3 L411 78.2 L413 78.6 L415 79.0 L417 78.1 L419 78.9 L421 78.5 L423 78.0 L425 78.3 L427 78.7 L429 78.6 L431 77.7 L433 78.5 L435 77.6 L437 77.5 L439 77.5 L441 77.4 L443 77.3 L445 77.3 L447 78.0 L449 77.1 L451 77.8 L453 77.8 L455 79.2 L457 78.6 L459 78.5 L461 78.4 L463 78.3 L465 79.1 L467 79.0 L469 78.9 L471 77.9 L473 78.4 L475 77.3 L477 77.7 L479 76.8 L481 77.2 L483 78.5 L485 78.7 L487 78.6 L489 79.4 L491 79.3 L493 78.5 L495 79.3 L497 78.8 L499 78.4 L501 78.4 L503 78.3 L505 78.3 L507 78.3 L509 78.3 L511 78.2 L513 79.0 L515 78.2 L517 78.9 L519 78.9 L521 78.5 L523 78.5 L525 78.1 L527 78.1 L529 78.1 L531 78.9 L533 78.1 L535 78.5 L537 78.5 L539 78.5 L541 78.5 L543 78.5 L545 78.1 L547 78.5 L549 78.5 L551 78.5 L553 78.1 L555 78.9 L557 78.5 L559 78.5 L561 78.9 L563 78.9 L565 78.5 L567 78.5 L569 78.9 L571 78.9 L573 78.1 L575 78.5 L577 78.1 L579 78.5 L581 78.9 L583 78.1 L585 78.5 L587 78.5 L589 78.9 L591 78.1 L593 78.9 L595 78.9 L597 78.1 L599 78.9 L601 78.1 L603 78.9 L605 78.5 L607 78.1 L609 78.5 L611 78.1 L613 78.9 L615 78.1 L617 78.5 L619 78.1 L621 78.1 L623 78.5 L625 78.5 L627 78.1 L629 78.5 L631 78.9 L633 78.1 L635 78.5 L637 78.9 L639 78.5 L641 78.9 L643 78.5 L645 78.9 L647 78.1 L649 78.5 L651 78.1 L653 78.9 L655 78.1 L657 78.5 L659 78.1 L661 78.1 L663 78.9 L665 78.1 L667 78.5 L669 78.9 L671 78.9 L673 78.1 L675 78.9 L677 78.5 L679 78.5 L681 78.1 L683 78.5 L685 78.5 L687 78.9 L689 78.1 L691 78.5 L693 78.9 L695 78.1 L697 78.5 L699 78.1 L701 78.5 L703 78.5 L705 78.5 L707 78.9 L709 78.9 L711 78.1 L713 78.5 L715 78.9 L717 78.1 L719 78.5 L721 78.1 L723 78.9 L725 78.9 L727 78.9 L729 78.9 L731 78.9 L733 78.1 L735 78.5 L737 78.9 L739 78.5 L741 78.9 L743 78.1 L745 78.5 L747 78.9 L749 78.9 L751 78.9 L753 78.5 L755 78.1 L757 78.5 L759 78.5 L761 78.9 L763 78.5 L765 78.9 L767 78.1 L769 78.1 L771 78.5 L773 78.5 L775 78.9 L777 78.9 L779 78.1 L781 78.9 L783 78.1 L785 78.5 L787 78.5 L789 78.9 L791 78.9 L793 78.1 L795 78.9 L797 78.1 L799 78.1 L801 78.9 L803 78.5 L805 78.9 L807 76.7 L809 71.9 L811 66.7 L813 65.5 L815 71.0 L817 75.4 L819 78.8 L821 79.5 L823 78.3 L825 76.1 L827 74.3 L829 76.8 L831 79.1 L833 79.6 L835 79.3 L837 79.5 L839 80.0 L841 80.5 L843 80.1 L845 80.2 L847 80.4 L849 80.0 L851 79.6 L853 79.7 L855 79.2 L857 80.2 L859 80.1 L861 80.5 L863 80.5 L865 80.1 L867 80.1 L869 80.5 L871 80.5 L873 80.9 L875 80.1 L877 80.9 L879 80.9 L881 80.5 L883 80.5 L885 80.6 L887 80.4 L889 75.7 L891 75.4 L893 79.6 L895 80.0 L897 79.7 L899 80.5 L901 79.7 L903 80.1 L905 80.6 L907 80.6 L909 80.6 L911 80.6 L913 80.7 L915 80.3 L917 79.9 L919 80.8 L921 80.8 L923 80.8 L925 80.8 L927 80.9 L929 80.9 L931 79.7 L933 79.8 L935 78.3 L937 78.6 L939 78.2 L941 79.2 L943 79.9 L945 80.4 L947 80.4 L949 80.7 L951 80.7 L953 79.8 L955 80.1 L957 79.6 L959 79.4 L961 78.5 L963 78.4 L965 79.4 L967 79.4 L969 80.1 L971 80.1 L973 80.2 L975 80.2 L977 79.9 L979 80.7 L981 80.4 L983 80.8 L985 80.8 L987 80.2 L989 78.8 L991 79.9 L993 80.0 L995 80.0 L997 80.3 L999 80.2 L1001 79.6 L1003 79.5 L1005 79.7 L1007 80.0 L1009 79.1 L1011 79.2 L1013 80.1 L1015 79.4 L1017 80.3 L1019 80.0 L1021 79.6 L1023 80.3 L1025 79.9 L1027 80.2 L1029 79.4 L1031 80.1 L1033 79.7 L1035 80.0 L1037 79.2 L1039 79.9 L1041 79.5 L1043 80.0 L1045 79.6 L1047 79.7 L1049 80.1 L1051 79.8 L1053 79.4 L1055 80.3 L1057 79.5 L1059 80.0 L1061 80.4 L1063 79.5 L1065 80.2 L1067 80.2 L1069 79.7 L1071 80.0 L1073 79.2 L1075 79.6 L1077 80.1 L1079 80.8 L1081 81.4 L1083 81.3 L1085 80.6 L1087 79.6 L1089 79.0 L1091 77.0 L1093 74.4 L1095 74.4 L1097 77.4 L1099 78.5 L1101 78.9 L1103 78.1 L1105 75.4 L1107 75.3 L1109 78.2 L1111 80.0 L1113 79.7 L1115 80.3 L1117 79.6 L1119 80.2 L1121 80.3 L1123 80.1 L1125 80.2 L1127 80.4 L1129 80.5 L1131 81.2 L1133 79.8 L1135 78.9 L1137 77.0 L1139 77.0 L1141 79.3 L1143 79.3 L1145 78.7 L1147 78.6 L1149 78.6 L1151 79.2 L1153 79.7 L1155 80.4 L1157 80.5 L1159 80.9 L1161 80.9 L1163 79.6 L1165 77.5 L1167 75.5 L1169 76.8 L1171 79.5 L1173 80.3 L1175 79.9 L1177 80.2 L1179 79.8 L1181 79.7 L1183 80.1 L1185 79.2 L1187 79.6 L1189 79.1 L1191 79.9 L1193 79.4 L1195 79.2 L1197 78.7 L1199 79.5 L1201 79.1 L1203 79.3 L1205 79.5 L1207 79.7 L1209 79.9 L1211 80.4 L1213 80.3 L1215 79.4 L1217 80.1 L1219 79.6 L1221 79.1 L1223 79.3 L1225 78.9 L1227 78.2 L1229 77.8 L1231 78.2 L1233 77.4 L1235 76.7" fill="none" stroke="#d8820a" stroke-width="1.1"/><path d="M318.6 63 V80 M318.6 63.8 L329.8 67.5 L318.6 71.8" fill="none" stroke="#ffff00" stroke-width="1.5"/><rect x="71.6" y="62.6" width="1.4" height="24.4" fill="#fff"/></svg>
<div class="a" style="left:7px;top:63px;width:64px;height:12.5px;background:#000;"></div>
<div class="a" style="left:7px;top:75.5px;width:59px;height:10.8px;background:#000;"></div>
<div class="a" style="left:8px;top:63.5px;white-space:nowrap;color:#f59a0a;font-family:'Liberation Mono',monospace;font-weight:bold;font-size:11px;letter-spacing:0.55px;line-height:12px;">277.00 p/s</div>
<div class="a" style="left:8px;top:76.3px;white-space:nowrap;color:#fff;font-family:'Liberation Mono',monospace;font-weight:bold;font-size:11px;letter-spacing:0.55px;line-height:12px;">-12.319s</div>
<div class="a" style="left:75.5px;top:63.5px;white-space:nowrap;color:#fff;font-family:'Liberation Mono',monospace;font-weight:bold;font-size:11px;letter-spacing:0.55px;line-height:12px;">0.000s</div>
<div class="a" style="left:5px;top:97.3px;width:1230px;height:18.6px;background:#cfdeee;border:1px solid #a9adb3;border-top-color:#c6c8cc;border-bottom-color:#b0b4ba;box-shadow:inset 1px 1px 0 #e4edf8, inset 0 -1px 0 #e4edf8"></div>
<div class="t" style="left:14.5px;top:98.50px;letter-spacing:-0.303px;">Time:0.000000s</div>
<div class="t" style="left:108px;top:98.50px;letter-spacing:-0.336px;">Real time:Jan. 1, 07:14:12</div>
<div class="t" style="left:251px;top:98.50px;letter-spacing:-0.172px;">Nodes:0</div>
<div class="t" style="left:307.5px;top:98.50px;letter-spacing:-0.515px;">Event:EFR Rx packet</div>
<div class="a" style="left:1220.9px;top:100.9px;width:8px;height:8.1px;border:1px solid #1a1a1a;border-top-width:2px;background:#fff"></div>
<div class="a" style="left:5px;top:300.8px;width:1230px;height:6px;background:#cfdeee;"></div>
<svg class="a" style="left:0;top:116px" width="1235" height="184" viewBox="0 116 1235 184"><defs><pattern id="ck" width="2" height="2" patternUnits="userSpaceOnUse"><rect width="2" height="2" fill="#a2a2a2"/><rect width="1" height="1" fill="#505050"/><rect x="1" y="1" width="1" height="1" fill="#868686"/></pattern></defs><path d="M946 148.1 H141" stroke="#ff0a0a" stroke-width="2.2" fill="none"/><path d="M149.6 144.4 L140.4 148.1 L149.6 152.2" stroke="#ff0a0a" stroke-width="1.8" fill="none" stroke-linejoin="miter"/><path d="M140 148.1 L144.5 146.6 V149.8 Z" fill="#ff0a0a"/><polygon points="132.2,143.7 134.8,143.7 138.2,147.1 138.2,149.7 134.8,153.1 132.2,153.1 128.8,149.7 128.8,147.1" fill="url(#ck)"/><polygon points="276.6,143.7 279.2,143.7 282.6,147.1 282.6,149.7 279.2,153.1 276.6,153.1 273.2,149.7 273.2,147.1" fill="url(#ck)"/><polygon points="324.8,143.7 327.4,143.7 330.8,147.1 330.8,149.7 327.4,153.1 324.8,153.1 321.4,149.7 321.4,147.1" fill="url(#ck)"/><polygon points="372.9,143.7 375.6,143.7 378.9,147.1 378.9,149.7 375.6,153.1 372.9,153.1 369.6,149.7 369.6,147.1" fill="url(#ck)"/><polygon points="421.1,143.7 423.7,143.7 427.1,147.1 427.1,149.7 423.7,153.1 421.1,153.1 417.7,149.7 417.7,147.1" fill="url(#ck)"/><polygon points="469.2,143.7 471.8,143.7 475.2,147.1 475.2,149.7 471.8,153.1 469.2,153.1 465.8,149.7 465.8,147.1" fill="url(#ck)"/><polygon points="517.4,143.7 520.0,143.7 523.4,147.1 523.4,149.7 520.0,153.1 517.4,153.1 514.0,149.7 514.0,147.1" fill="url(#ck)"/><polygon points="565.5,143.7 568.1,143.7 571.5,147.1 571.5,149.7 568.1,153.1 565.5,153.1 562.1,149.7 562.1,147.1" fill="url(#ck)"/><polygon points="613.7,143.7 616.3,143.7 619.7,147.1 619.7,149.7 616.3,153.1 613.7,153.1 610.3,149.7 610.3,147.1" fill="url(#ck)"/><polygon points="854.4,143.7 857.0,143.7 860.4,147.1 860.4,149.7 857.0,153.1 854.4,153.1 851.0,149.7 851.0,147.1" fill="url(#ck)"/><polygon points="902.6,143.7 905.2,143.7 908.6,147.1 908.6,149.7 905.2,153.1 902.6,153.1 899.2,149.7 899.2,147.1" fill="url(#ck)"/><polygon points="950.8,143.7 953.3,143.7 956.8,147.1 956.8,149.7 953.3,153.1 950.8,153.1 947.3,149.7 947.3,147.1" fill="url(#ck)"/><polygon points="998.9,143.7 1001.5,143.7 1004.9,147.1 1004.9,149.7 1001.5,153.1 998.9,153.1 995.5,149.7 995.5,147.1" fill="url(#ck)"/><polygon points="1047.1,143.7 1049.7,143.7 1053.1,147.1 1053.1,149.7 1049.7,153.1 1047.1,153.1 1043.7,149.7 1043.7,147.1" fill="url(#ck)"/><polygon points="1095.2,143.7 1097.8,143.7 1101.2,147.1 1101.2,149.7 1097.8,153.1 1095.2,153.1 1091.8,149.7 1091.8,147.1" fill="url(#ck)"/><polygon points="1143.4,143.7 1146.0,143.7 1149.4,147.1 1149.4,149.7 1146.0,153.1 1143.4,153.1 1140.0,149.7 1140.0,147.1" fill="url(#ck)"/><polygon points="1191.5,143.7 1194.1,143.7 1197.5,147.1 1197.5,149.7 1194.1,153.1 1191.5,153.1 1188.1,149.7 1188.1,147.1" fill="url(#ck)"/><polygon points="35.9,191.8 38.5,191.8 41.9,195.2 41.9,197.8 38.5,201.2 35.9,201.2 32.5,197.8 32.5,195.2" fill="url(#ck)"/><polygon points="84.0,191.8 86.6,191.8 90.0,195.2 90.0,197.8 86.6,201.2 84.0,201.2 80.6,197.8 80.6,195.2" fill="url(#ck)"/><polygon points="132.2,191.8 134.8,191.8 138.2,195.2 138.2,197.8 134.8,201.2 132.2,201.2 128.8,197.8 128.8,195.2" fill="url(#ck)"/><polygon points="180.3,191.8 183.0,191.8 186.3,195.2 186.3,197.8 183.0,201.2 180.3,201.2 177.0,197.8 177.0,195.2" fill="url(#ck)"/><polygon points="228.5,191.8 231.1,191.8 234.5,195.2 234.5,197.8 231.1,201.2 228.5,201.2 225.1,197.8 225.1,195.2" fill="url(#ck)"/><polygon points="276.6,191.8 279.2,191.8 282.6,195.2 282.6,197.8 279.2,201.2 276.6,201.2 273.2,197.8 273.2,195.2" fill="url(#ck)"/><polygon points="324.8,191.8 327.4,191.8 330.8,195.2 330.8,197.8 327.4,201.2 324.8,201.2 321.4,197.8 321.4,195.2" fill="url(#ck)"/><polygon points="372.9,191.8 375.6,191.8 378.9,195.2 378.9,197.8 375.6,201.2 372.9,201.2 369.6,197.8 369.6,195.2" fill="url(#ck)"/><polygon points="421.1,191.8 423.7,191.8 427.1,195.2 427.1,197.8 423.7,201.2 421.1,201.2 417.7,197.8 417.7,195.2" fill="url(#ck)"/><polygon points="469.2,191.8 471.8,191.8 475.2,195.2 475.2,197.8 471.8,201.2 469.2,201.2 465.8,197.8 465.8,195.2" fill="url(#ck)"/><polygon points="517.4,191.8 520.0,191.8 523.4,195.2 523.4,197.8 520.0,201.2 517.4,201.2 514.0,197.8 514.0,195.2" fill="url(#ck)"/><polygon points="565.5,191.8 568.1,191.8 571.5,195.2 571.5,197.8 568.1,201.2 565.5,201.2 562.1,197.8 562.1,195.2" fill="url(#ck)"/><polygon points="613.7,191.8 616.3,191.8 619.7,195.2 619.7,197.8 616.3,201.2 613.7,201.2 610.3,197.8 610.3,195.2" fill="url(#ck)"/><polygon points="661.8,191.8 664.4,191.8 667.8,195.2 667.8,197.8 664.4,201.2 661.8,201.2 658.4,197.8 658.4,195.2" fill="url(#ck)"/><polygon points="710.0,191.8 712.6,191.8 716.0,195.2 716.0,197.8 712.6,201.2 710.0,201.2 706.6,197.8 706.6,195.2" fill="url(#ck)"/><polygon points="758.1,191.8 760.7,191.8 764.1,195.2 764.1,197.8 760.7,201.2 758.1,201.2 754.7,197.8 754.7,195.2" fill="url(#ck)"/><polygon points="806.3,191.8 808.9,191.8 812.3,195.2 812.3,197.8 808.9,201.2 806.3,201.2 802.9,197.8 802.9,195.2" fill="url(#ck)"/><polygon points="854.4,191.8 857.0,191.8 860.4,195.2 860.4,197.8 857.0,201.2 854.4,201.2 851.0,197.8 851.0,195.2" fill="url(#ck)"/><polygon points="902.6,191.8 905.2,191.8 908.6,195.2 908.6,197.8 905.2,201.2 902.6,201.2 899.2,197.8 899.2,195.2" fill="url(#ck)"/><polygon points="950.8,191.8 953.3,191.8 956.8,195.2 956.8,197.8 953.3,201.2 950.8,201.2 947.3,197.8 947.3,195.2" fill="url(#ck)"/><polygon points="998.9,191.8 1001.5,191.8 1004.9,195.2 1004.9,197.8 1001.5,201.2 998.9,201.2 995.5,197.8 995.5,195.2" fill="url(#ck)"/><polygon points="1047.1,191.8 1049.7,191.8 1053.1,195.2 1053.1,197.8 1049.7,201.2 1047.1,201.2 1043.7,197.8 1043.7,195.2" fill="url(#ck)"/><polygon points="1095.2,191.8 1097.8,191.8 1101.2,195.2 1101.2,197.8 1097.8,201.2 1095.2,201.2 1091.8,197.8 1091.8,195.2" fill="url(#ck)"/></svg>
<div class="m" style="left:109px;top:124.1px;color:#0808ff">-15 dBm</div>
<div class="m" style="left:123.5px;top:164.6px;">000440144682</div>
<div class="m" style="left:123.5px;top:175.3px;">(2010)</div>
<div class="m" style="left:268px;top:164.6px;">000440144683</div>
<div class="m" style="left:268px;top:175.3px;">(2012)</div>
<div class="m" style="left:316px;top:164.6px;">000440144681</div>
<div class="m" style="left:316px;top:175.3px;">(2012)</div>
<div class="m" style="left:846px;top:175.3px;">(2010)</div>
<div class="m" style="left:653px;top:223.3px;">(C000)</div>
<div class="m" style="left:991px;top:223.3px;">(2006)</div>
<div class="a" style="left:5px;top:305.5px;width:1230px;height:19px;background:#f0f0f0;border-top:1px solid #b4b8be;border-left:1px solid #b4b8be"></div>
<div class="a" style="left:7px;top:307px;width:7.8px;height:15.7px;background:#cfdeee;"></div>
<div class="a" style="left:1195px;top:307px;width:39px;height:15.7px;background:#cfdeee;"></div>
<div class="t" style="left:14.5px;top:307.60px;letter-spacing:-0.191px;">Transactions</div>
<div class="t" style="left:95.5px;top:307.60px;letter-spacing:-0.152px;">total:3,235 shown:3,168</div>
<svg class="a" style="left:1205px;top:311px" width="11" height="8" viewBox="0 0 11 8"><path d="M1 1.2 H10 L5.5 6.4 Z" fill="#fff" stroke="#222" stroke-width="1"/></svg>
<div class="a" style="left:1220.8px;top:309.1px;width:8.6px;height:8.9px;border:1px solid #1a1a1a;border-top-width:2px;background:#fff"></div>
<div class="a" style="left:6px;top:324px;width:1229px;height:2px;background:#9fa3a8;border-bottom:1px solid #d8dadc"></div>
<div class="a" style="left:6px;top:326px;width:1229px;height:476px;background:#fff;"></div>
<div class="a" style="left:6px;top:326px;width:1229px;height:459px;overflow:hidden">
<div class="a" style="left:16.50px;top:21.40px;width:1194.60px;height:19.18px;background:#ffcccc;"></div>
<div class="a" style="left:16.50px;top:40.58px;width:1194.60px;height:19.18px;background:#ffcccc;"></div>
<div class="a" style="left:16.50px;top:59.76px;width:1194.60px;height:19.18px;background:#ffcccc;"></div>
<div class="a" style="left:16.50px;top:78.94px;width:1194.60px;height:19.18px;background:#ffcccc;"></div>
<div class="a" style="left:16.50px;top:98.12px;width:1194.60px;height:19.18px;background:#ffcccc;"></div>
<div class="a" style="left:16.50px;top:117.30px;width:1194.60px;height:19.18px;background:#ffcccc;"></div>
<div class="a" style="left:16.50px;top:136.48px;width:1194.60px;height:19.18px;background:#ffcccc;"></div>
<div class="a" style="left:16.50px;top:155.66px;width:1194.60px;height:19.18px;background:#ffcccc;"></div>
<div class="a" style="left:16.50px;top:174.84px;width:1194.60px;height:19.18px;background:#ffcccc;"></div>
<div class="a" style="left:16.50px;top:194.02px;width:1194.60px;height:19.18px;background:#ffcccc;"></div>
<div class="a" style="left:16.50px;top:213.20px;width:1194.60px;height:19.18px;background:#ffcccc;"></div>
<div class="a" style="left:16.50px;top:232.38px;width:1194.60px;height:19.18px;background:#ffcccc;"></div>
<div class="a" style="left:16.50px;top:385.82px;width:1194.60px;height:19.18px;background:#ccffcc;"></div>
<div class="a" style="left:16.50px;top:405.00px;width:1194.60px;height:19.18px;background:#ffcccc;"></div>
<div class="a" style="left:16.50px;top:424.18px;width:1194.60px;height:19.18px;background:#ccffcc;"></div>
<div class="a" style="left:16.50px;top:443.36px;width:1194.60px;height:19.18px;background:#ffcccc;"></div>
<div class="a" style="left:35.10px;top:0.00px;width:1.50px;height:22.00px;background:#f0f1f5;"></div>
<div class="a" style="left:35.10px;top:21.40px;width:1.50px;height:440.00px;background:rgba(240,245,253,0.85);"></div>
<div class="a" style="left:167.90px;top:0.00px;width:1.50px;height:22.00px;background:#f0f1f5;"></div>
<div class="a" style="left:167.90px;top:21.40px;width:1.50px;height:440.00px;background:rgba(240,245,253,0.85);"></div>
<div class="a" style="left:251.90px;top:0.00px;width:1.50px;height:22.00px;background:#f0f1f5;"></div>
<div class="a" style="left:251.90px;top:21.40px;width:1.50px;height:440.00px;background:rgba(240,245,253,0.85);"></div>
<div class="a" style="left:554.90px;top:0.00px;width:1.50px;height:22.00px;background:#f0f1f5;"></div>
<div class="a" style="left:554.90px;top:21.40px;width:1.50px;height:440.00px;background:rgba(240,245,253,0.85);"></div>
<div class="a" style="left:675.90px;top:0.00px;width:1.50px;height:22.00px;background:#f0f1f5;"></div>
<div class="a" style="left:675.90px;top:21.40px;width:1.50px;height:440.00px;background:rgba(240,245,253,0.85);"></div>
<div class="a" style="left:796.40px;top:0.00px;width:1.50px;height:22.00px;background:#f0f1f5;"></div>
<div class="a" style="left:796.40px;top:21.40px;width:1.50px;height:440.00px;background:rgba(240,245,253,0.85);"></div>
<div class="a" style="left:856.40px;top:0.00px;width:1.50px;height:22.00px;background:#f0f1f5;"></div>
<div class="a" style="left:856.40px;top:21.40px;width:1.50px;height:440.00px;background:rgba(240,245,253,0.85);"></div>
<div class="a" style="left:916.80px;top:0.00px;width:1.50px;height:22.00px;background:#f0f1f5;"></div>
<div class="a" style="left:916.80px;top:21.40px;width:1.50px;height:440.00px;background:rgba(240,245,253,0.85);"></div>
<div class="a" style="left:976.90px;top:0.00px;width:1.50px;height:22.00px;background:#f0f1f5;"></div>
<div class="a" style="left:976.90px;top:21.40px;width:1.50px;height:440.00px;background:rgba(240,245,253,0.85);"></div>
<div class="a" style="left:1097.20px;top:0.00px;width:1.50px;height:22.00px;background:#f0f1f5;"></div>
<div class="a" style="left:1097.20px;top:21.40px;width:1.50px;height:440.00px;background:rgba(240,245,253,0.85);"></div>
<div class="a" style="left:1.00px;top:270.74px;width:1210.00px;height:19.18px;background:#d9d9d9;"></div>
<div class="a" style="left:35.10px;top:270.74px;width:1.50px;height:19.18px;background:rgba(205,212,222,0.6);"></div>
<div class="a" style="left:167.90px;top:270.74px;width:1.50px;height:19.18px;background:rgba(205,212,222,0.6);"></div>
<div class="a" style="left:251.90px;top:270.74px;width:1.50px;height:19.18px;background:rgba(205,212,222,0.6);"></div>
<div class="a" style="left:554.90px;top:270.74px;width:1.50px;height:19.18px;background:rgba(205,212,222,0.6);"></div>
<div class="a" style="left:675.90px;top:270.74px;width:1.50px;height:19.18px;background:rgba(205,212,222,0.6);"></div>
<div class="a" style="left:796.40px;top:270.74px;width:1.50px;height:19.18px;background:rgba(205,212,222,0.6);"></div>
<div class="a" style="left:856.40px;top:270.74px;width:1.50px;height:19.18px;background:rgba(205,212,222,0.6);"></div>
<div class="a" style="left:916.80px;top:270.74px;width:1.50px;height:19.18px;background:rgba(205,212,222,0.6);"></div>
<div class="a" style="left:976.90px;top:270.74px;width:1.50px;height:19.18px;background:rgba(205,212,222,0.6);"></div>
<div class="a" style="left:1097.20px;top:270.74px;width:1.50px;height:19.18px;background:rgba(205,212,222,0.6);"></div>
<div class="t" style="left:41.50px;top:3.70px;letter-spacing:-0.112px;">Time</div>
<div class="t" style="left:174.50px;top:3.70px;letter-spacing:0.112px;">Duration</div>
<div class="t" style="left:258.50px;top:3.70px;letter-spacing:-0.214px;">Summary</div>
<div class="t" style="left:560.50px;top:3.70px;letter-spacing:-0.402px;">NWK Src</div>
<div class="t" style="left:681.50px;top:3.70px;letter-spacing:-0.215px;">NWK Dest</div>
<div class="t" style="left:802.50px;top:3.70px;letter-spacing:-0.438px;">P#</div>
<div class="t" style="left:862.50px;top:3.70px;letter-spacing:0.597px;">M#</div>
<div class="t" style="left:922.50px;top:3.70px;letter-spacing:-0.764px;">E#</div>
<div class="t" style="left:982.50px;top:3.70px;letter-spacing:-0.221px;">Error Status</div>
<div class="t" style="left:1103.50px;top:3.70px;letter-spacing:-0.058px;">Warning Status</div>
<div class="t" style="left:41.50px;top:23.99px;letter-spacing:-0.152px;">-1.314204</div>
<div class="t" style="left:174.50px;top:23.99px;letter-spacing:-0.311px;">0.001</div>
<div class="t" style="left:258.50px;top:23.99px;letter-spacing:-0.303px;">BLE Adv - Scan Request/Response</div>
<div class="t" style="left:560.50px;top:23.99px;letter-spacing:-0.201px;">55 82 70 8A 0D F1</div>
<div class="t" style="left:681.50px;top:23.99px;letter-spacing:-0.213px;">4B 76 31 93 70 78</div>
<div class="t" style="left:802.50px;top:23.99px;letter-spacing:-0.219px;">2</div>
<div class="t" style="left:41.50px;top:43.17px;letter-spacing:-0.152px;">-1.310602</div>
<div class="t" style="left:174.50px;top:43.17px;letter-spacing:-0.311px;">0.001</div>
<div class="t" style="left:258.50px;top:43.17px;letter-spacing:-0.365px;">BLE LL - Adv Scan Request</div>
<div class="t" style="left:560.50px;top:43.17px;letter-spacing:-0.306px;">72 B7 27 BF 46 A6</div>
<div class="t" style="left:681.50px;top:43.17px;letter-spacing:-0.213px;">4B 76 31 93 70 78</div>
<div class="t" style="left:802.50px;top:43.17px;letter-spacing:-0.219px;">1</div>
<div class="t" style="left:982.50px;top:43.17px;letter-spacing:-0.092px;">Missing packets</div>
<div class="t" style="left:41.50px;top:62.35px;letter-spacing:-0.152px;">-0.991271</div>
<div class="t" style="left:174.50px;top:62.35px;letter-spacing:-0.311px;">0.001</div>
<div class="t" style="left:258.50px;top:62.35px;letter-spacing:-0.365px;">BLE LL - Adv Scan Request</div>
<div class="t" style="left:560.50px;top:62.35px;letter-spacing:-0.201px;">55 82 70 8A 0D F1</div>
<div class="t" style="left:681.50px;top:62.35px;letter-spacing:-0.494px;">18 B4 30 DE 0E F6</div>
<div class="t" style="left:802.50px;top:62.35px;letter-spacing:-0.219px;">1</div>
<div class="t" style="left:982.50px;top:62.35px;letter-spacing:-0.092px;">Missing packets</div>
<div class="t" style="left:41.50px;top:81.53px;letter-spacing:-0.152px;">-0.801700</div>
<div class="t" style="left:174.50px;top:81.53px;letter-spacing:-0.311px;">0.001</div>
<div class="t" style="left:258.50px;top:81.53px;letter-spacing:-0.365px;">BLE LL - Adv Scan Request</div>
<div class="t" style="left:560.50px;top:81.53px;letter-spacing:-0.300px;">7F A7 32 2E 14 92</div>
<div class="t" style="left:681.50px;top:81.53px;letter-spacing:-0.162px;">67 A7 A7 29 51 3F</div>
<div class="t" style="left:802.50px;top:81.53px;letter-spacing:-0.219px;">1</div>
<div class="t" style="left:982.50px;top:81.53px;letter-spacing:-0.092px;">Missing packets</div>
<div class="t" style="left:41.50px;top:100.71px;letter-spacing:-0.152px;">-0.800037</div>
<div class="t" style="left:174.50px;top:100.71px;letter-spacing:-0.311px;">0.001</div>
<div class="t" style="left:258.50px;top:100.71px;letter-spacing:-0.303px;">BLE Adv - Scan Request/Response</div>
<div class="t" style="left:560.50px;top:100.71px;letter-spacing:-0.300px;">7F A7 32 2E 14 92</div>
<div class="t" style="left:681.50px;top:100.71px;letter-spacing:-0.682px;">90 FD 9F C8 EF FC</div>
<div class="t" style="left:802.50px;top:100.71px;letter-spacing:-0.219px;">2</div>
<div class="t" style="left:41.50px;top:119.89px;letter-spacing:-0.152px;">-0.784560</div>
<div class="t" style="left:174.50px;top:119.89px;letter-spacing:-0.311px;">0.001</div>
<div class="t" style="left:258.50px;top:119.89px;letter-spacing:-0.303px;">BLE Adv - Scan Request/Response</div>
<div class="t" style="left:560.50px;top:119.89px;letter-spacing:-0.300px;">7F A7 32 2E 14 92</div>
<div class="t" style="left:681.50px;top:119.89px;letter-spacing:-0.168px;">75 D2 69 28 6D 6A</div>
<div class="t" style="left:802.50px;top:119.89px;letter-spacing:-0.219px;">2</div>
<div class="t" style="left:41.50px;top:139.07px;letter-spacing:-0.152px;">-0.714961</div>
<div class="t" style="left:174.50px;top:139.07px;letter-spacing:-0.311px;">0.001</div>
<div class="t" style="left:258.50px;top:139.07px;letter-spacing:-0.303px;">BLE Adv - Scan Request/Response</div>
<div class="t" style="left:560.50px;top:139.07px;letter-spacing:-0.201px;">55 82 70 8A 0D F1</div>
<div class="t" style="left:681.50px;top:139.07px;letter-spacing:-0.446px;">90 FD 9F C8 F0 19</div>
<div class="t" style="left:802.50px;top:139.07px;letter-spacing:-0.219px;">2</div>
<div class="t" style="left:41.50px;top:158.25px;letter-spacing:-0.152px;">-0.412432</div>
<div class="t" style="left:174.50px;top:158.25px;letter-spacing:-0.311px;">0.001</div>
<div class="t" style="left:258.50px;top:158.25px;letter-spacing:-0.365px;">BLE LL - Adv Scan Request</div>
<div class="t" style="left:560.50px;top:158.25px;letter-spacing:-0.201px;">55 82 70 8A 0D F1</div>
<div class="t" style="left:681.50px;top:158.25px;letter-spacing:-0.145px;">60 AB D2 08 A9 52</div>
<div class="t" style="left:802.50px;top:158.25px;letter-spacing:-0.219px;">1</div>
<div class="t" style="left:982.50px;top:158.25px;letter-spacing:-0.092px;">Missing packets</div>
<div class="t" style="left:41.50px;top:177.43px;letter-spacing:-0.152px;">-0.317683</div>
<div class="t" style="left:174.50px;top:177.43px;letter-spacing:-0.311px;">0.001</div>
<div class="t" style="left:258.50px;top:177.43px;letter-spacing:-0.303px;">BLE Adv - Scan Request/Response</div>
<div class="t" style="left:560.50px;top:177.43px;letter-spacing:-0.236px;">55 25 59 DF 08 41</div>
<div class="t" style="left:681.50px;top:177.43px;letter-spacing:-0.446px;">90 FD 9F C8 F0 19</div>
<div class="t" style="left:802.50px;top:177.43px;letter-spacing:-0.219px;">2</div>
<div class="t" style="left:41.50px;top:196.61px;letter-spacing:-0.152px;">-0.200034</div>
<div class="t" style="left:174.50px;top:196.61px;letter-spacing:-0.311px;">0.001</div>
<div class="t" style="left:258.50px;top:196.61px;letter-spacing:-0.303px;">BLE Adv - Scan Request/Response</div>
<div class="t" style="left:560.50px;top:196.61px;letter-spacing:-0.300px;">7F A7 32 2E 14 92</div>
<div class="t" style="left:681.50px;top:196.61px;letter-spacing:-0.682px;">90 FD 9F C8 EF FC</div>
<div class="t" style="left:802.50px;top:196.61px;letter-spacing:-0.219px;">2</div>
<div class="t" style="left:41.50px;top:215.79px;letter-spacing:-0.152px;">-0.121073</div>
<div class="t" style="left:174.50px;top:215.79px;letter-spacing:-0.311px;">0.004</div>
<div class="t" style="left:258.50px;top:215.79px;letter-spacing:-0.303px;">BLE Adv - Scan Request/Response</div>
<div class="t" style="left:560.50px;top:215.79px;letter-spacing:-0.184px;">71 59 93 AC 12 50</div>
<div class="t" style="left:681.50px;top:215.79px;letter-spacing:-0.446px;">90 FD 9F C8 F0 19</div>
<div class="t" style="left:802.50px;top:215.79px;letter-spacing:-0.219px;">2</div>
<div class="t" style="left:41.50px;top:234.97px;letter-spacing:-0.053px;">-0.117276</div>
<div class="t" style="left:174.50px;top:234.97px;letter-spacing:-0.311px;">0.001</div>
<div class="t" style="left:258.50px;top:234.97px;letter-spacing:-0.303px;">BLE Adv - Scan Request/Response</div>
<div class="t" style="left:560.50px;top:234.97px;letter-spacing:-0.237px;">50 4A D4 8D 5B 5B</div>
<div class="t" style="left:681.50px;top:234.97px;letter-spacing:-0.446px;">90 FD 9F C8 F0 19</div>
<div class="t" style="left:802.50px;top:234.97px;letter-spacing:-0.219px;">2</div>
<div class="t" style="left:41.50px;top:254.15px;letter-spacing:-0.152px;">-0.101239</div>
<div class="t" style="left:174.50px;top:254.15px;letter-spacing:-0.311px;">1.991</div>
<div class="t" style="left:258.50px;top:254.15px;letter-spacing:-0.118px;">BT Mesh - Looking for Provisioner (Device: 53 69 6C 6<span style="letter-spacing:-0.85px">...</span></div>
<div class="t" style="left:560.50px;top:254.15px;letter-spacing:-0.682px;">90 FD 9F C8 EF FC</div>
<div class="t" style="left:681.50px;top:254.15px;letter-spacing:-0.184px;">71 59 93 AC 12 50</div>
<div class="t" style="left:802.50px;top:254.15px;letter-spacing:-0.211px;">41</div>
<div class="t" style="left:41.50px;top:273.33px;letter-spacing:-0.272px;">0.033810</div>
<div class="t" style="left:174.50px;top:273.33px;letter-spacing:-0.311px;">0.099</div>
<div class="t" style="left:258.50px;top:273.33px;letter-spacing:-0.253px;">BLE LL Control - Feature Exchange Procedure</div>
<div class="t" style="left:560.50px;top:273.33px;letter-spacing:-0.682px;">90 FD 9F C8 EF FC</div>
<div class="t" style="left:681.50px;top:273.33px;letter-spacing:-0.184px;">71 59 93 AC 12 50</div>
<div class="t" style="left:802.50px;top:273.33px;letter-spacing:-0.219px;">2</div>
<div class="t" style="left:41.50px;top:292.51px;letter-spacing:-0.272px;">0.034029</div>
<div class="t" style="left:174.50px;top:292.51px;letter-spacing:-0.311px;">0.098</div>
<div class="t" style="left:258.50px;top:292.51px;letter-spacing:-0.253px;">BLE LL Control - Feature Exchange Procedure</div>
<div class="t" style="left:560.50px;top:292.51px;letter-spacing:-0.184px;">71 59 93 AC 12 50</div>
<div class="t" style="left:681.50px;top:292.51px;letter-spacing:-0.682px;">90 FD 9F C8 EF FC</div>
<div class="t" style="left:802.50px;top:292.51px;letter-spacing:-0.219px;">2</div>
<div class="t" style="left:41.50px;top:311.69px;letter-spacing:-0.272px;">0.081099</div>
<div class="t" style="left:174.50px;top:311.69px;letter-spacing:-0.311px;">2.803</div>
<div class="t" style="left:258.50px;top:311.69px;letter-spacing:-0.118px;">BT Mesh - Looking for Provisioner (Device: 53 69 6C 6<span style="letter-spacing:-0.85px">...</span></div>
<div class="t" style="left:560.50px;top:311.69px;letter-spacing:-0.446px;">90 FD 9F C8 F0 19</div>
<div class="t" style="left:802.50px;top:311.69px;letter-spacing:-0.211px;">45</div>
<div class="t" style="left:982.50px;top:311.69px;letter-spacing:-0.092px;">Missing packets</div>
<div class="t" style="left:41.50px;top:330.87px;letter-spacing:-0.272px;">0.180142</div>
<div class="t" style="left:174.50px;top:330.87px;letter-spacing:-0.311px;">0.098</div>
<div class="t" style="left:258.50px;top:330.87px;letter-spacing:-0.144px;">BLE LL Control - Data Length Update Procedure</div>
<div class="t" style="left:560.50px;top:330.87px;letter-spacing:-0.682px;">90 FD 9F C8 EF FC</div>
<div class="t" style="left:681.50px;top:330.87px;letter-spacing:-0.184px;">71 59 93 AC 12 50</div>
<div class="t" style="left:802.50px;top:330.87px;letter-spacing:-0.219px;">2</div>
<div class="t" style="left:41.50px;top:350.05px;letter-spacing:-0.272px;">0.228507</div>
<div class="t" style="left:174.50px;top:350.05px;letter-spacing:-0.311px;">0.050</div>
<div class="t" style="left:258.50px;top:350.05px;letter-spacing:-0.217px;">BLE LL Control - Version Exchange Procedure</div>
<div class="t" style="left:560.50px;top:350.05px;letter-spacing:-0.184px;">71 59 93 AC 12 50</div>
<div class="t" style="left:681.50px;top:350.05px;letter-spacing:-0.682px;">90 FD 9F C8 EF FC</div>
<div class="t" style="left:802.50px;top:350.05px;letter-spacing:-0.219px;">2</div>
<div class="t" style="left:41.50px;top:369.23px;letter-spacing:-0.161px;">0.326011</div>
<div class="t" style="left:174.50px;top:369.23px;letter-spacing:-0.311px;">0.001</div>
<div class="t" style="left:258.50px;top:369.23px;letter-spacing:-0.093px;">BLE LL Control - Connection Update procedure</div>
<div class="t" style="left:560.50px;top:369.23px;letter-spacing:-0.184px;">71 59 93 AC 12 50</div>
<div class="t" style="left:681.50px;top:369.23px;letter-spacing:-0.682px;">90 FD 9F C8 EF FC</div>
<div class="t" style="left:802.50px;top:369.23px;letter-spacing:-0.219px;">1</div>
<div class="t" style="left:41.50px;top:388.41px;letter-spacing:-0.272px;">0.374766</div>
<div class="t" style="left:174.50px;top:388.41px;letter-spacing:-0.311px;">0.050</div>
<div class="t" style="left:258.50px;top:388.41px;letter-spacing:-0.266px;">BLE ATT - Read By Group Type Request/Response</div>
<div class="t" style="left:560.50px;top:388.41px;letter-spacing:-0.184px;">71 59 93 AC 12 50</div>
<div class="t" style="left:681.50px;top:388.41px;letter-spacing:-0.682px;">90 FD 9F C8 EF FC</div>
<div class="t" style="left:802.50px;top:388.41px;letter-spacing:-0.219px;">2</div>
<div class="t" style="left:41.50px;top:407.59px;letter-spacing:-0.161px;">0.421188</div>
<div class="t" style="left:174.50px;top:407.59px;letter-spacing:-0.311px;">0.001</div>
<div class="t" style="left:258.50px;top:407.59px;letter-spacing:-0.365px;">BLE LL - Adv Scan Request</div>
<div class="t" style="left:560.50px;top:407.59px;letter-spacing:-0.237px;">50 4A D4 8D 5B 5B</div>
<div class="t" style="left:681.50px;top:407.59px;letter-spacing:-0.419px;">18 B4 30 E1 E7 6D</div>
<div class="t" style="left:802.50px;top:407.59px;letter-spacing:-0.219px;">1</div>
<div class="t" style="left:982.50px;top:407.59px;letter-spacing:-0.092px;">Missing packets</div>
<div class="t" style="left:41.50px;top:426.77px;letter-spacing:-0.272px;">0.472268</div>
<div class="t" style="left:174.50px;top:426.77px;letter-spacing:-0.311px;">0.050</div>
<div class="t" style="left:258.50px;top:426.77px;letter-spacing:-0.266px;">BLE ATT - Read By Group Type Request/Response</div>
<div class="t" style="left:560.50px;top:426.77px;letter-spacing:-0.184px;">71 59 93 AC 12 50</div>
<div class="t" style="left:681.50px;top:426.77px;letter-spacing:-0.682px;">90 FD 9F C8 EF FC</div>
<div class="t" style="left:802.50px;top:426.77px;letter-spacing:-0.219px;">2</div>
<div class="t" style="left:41.50px;top:445.95px;letter-spacing:-0.272px;">0.480907</div>
<div class="t" style="left:174.50px;top:445.95px;letter-spacing:-0.311px;">0.004</div>
<div class="t" style="left:258.50px;top:445.95px;letter-spacing:-0.303px;">BLE Adv - Scan Request/Response</div>
<div class="t" style="left:560.50px;top:445.95px;letter-spacing:-0.201px;">55 82 70 8A 0D F1</div>
<div class="t" style="left:681.50px;top:445.95px;letter-spacing:-0.446px;">90 FD 9F C8 F0 19</div>
<div class="t" style="left:802.50px;top:445.95px;letter-spacing:-0.219px;">2</div>
</div>
<svg class="a" style="left:8.5px;top:579px" width="16" height="16" viewBox="0 0 16 16"><g fill="none" stroke="#5a8cac" stroke-width="1"><circle cx="5.4" cy="10.2" r="4.1"/><circle cx="9.6" cy="5.6" r="4.1"/></g><path d="M5.4 7.6 V10.4 H7.4 M9.6 3.2 V6 H11.6" fill="none" stroke="#4a74c4" stroke-width="0.9"/></svg>
<div class="a" style="left:1217px;top:326px;width:17px;height:459px;background:#f0f0f0;"></div>
<div class="a" style="left:1218px;top:365.5px;width:15px;height:16.5px;background:#cdcdcd;"></div>
<svg class="a" style="left:1220.5px;top:331px" width="10" height="8" viewBox="0 0 10 8"><path d="M1.4 6 L5 2.2 L8.6 6" fill="none" stroke="#505050" stroke-width="1.6"/></svg>
<svg class="a" style="left:1220.5px;top:771.5px" width="10" height="8" viewBox="0 0 10 8"><path d="M1.4 2 L5 5.8 L8.6 2" fill="none" stroke="#505050" stroke-width="1.6"/></svg>
<div class="a" style="left:6px;top:785.3px;width:1229px;height:15.5px;background:#f0f0f0;"></div>
<div class="a" style="left:23.3px;top:785.9px;width:1169.7px;height:14.6px;background:#cdcdcd;"></div>
<svg class="a" style="left:10px;top:788px" width="8" height="10" viewBox="0 0 8 10"><path d="M6 1.2 L2.2 5 L6 8.8" fill="none" stroke="#505050" stroke-width="1.6"/></svg>
<svg class="a" style="left:1204px;top:788px" width="8" height="10" viewBox="0 0 8 10"><path d="M2 1.2 L5.8 5 L2 8.8" fill="none" stroke="#505050" stroke-width="1.6"/></svg>
<div class="a" style="left:5px;top:324px;width:1px;height:478px;background:#80868e;"></div>
<div class="a" style="left:1234px;top:324px;width:1px;height:478px;background:#9aa0a8;"></div>
<div class="a" style="left:5px;top:801.7px;width:1230px;height:1px;background:#8a9098;"></div>
<div class="a" style="left:5px;top:802.7px;width:1230px;height:7px;background:#cfdeee;"></div>
<div class="a" style="left:5px;top:808.5px;width:1230px;height:18px;background:#f0f0f0;border-top:1px solid #b4b8be;border-left:1px solid #b4b8be"></div>
<div class="a" style="left:7px;top:810.2px;width:7.8px;height:15.3px;background:#cfdeee;"></div>
<div class="a" style="left:14.5px;top:809.8px;width:1195.3px;height:15.6px;background:#808080;"></div>
<div class="a" style="left:1209.8px;top:809.5px;width:25px;height:16.5px;background:#cfdeee;"></div>
<div class="t" style="left:15px;top:810.00px;letter-spacing:-0.443px;color:#e6e6e6">Events</div>
<div class="t" style="left:64px;top:810.00px;letter-spacing:-0.156px;color:#e6e6e6">total:27,086 shown:26,500</div>
<div class="t" style="left:215.5px;top:810.00px;letter-spacing:-0.080px;color:#e6e6e6">Decoders: Bluetooth Low Energy, Default Profile</div>
<div class="a" style="left:1221px;top:812.2px;width:8.3px;height:8px;border:1px solid #1a1a1a;border-top-width:2px;background:#fff"></div>
<div class="a" style="left:5px;top:826.5px;width:1230px;height:2px;background:#9fa3a8;border-bottom:1px solid #d8dadc"></div>
<div class="a" style="left:5px;top:828.5px;width:1px;height:287px;background:#8a9098;"></div>
<div class="a" style="left:1234px;top:828.5px;width:1px;height:287px;background:#9aa0a8;"></div>
<div class="a" style="left:6px;top:829px;width:1229px;height:284px;background:#fff;"></div>
<div class="a" style="left:6px;top:829px;width:1228px;height:283.5px;overflow:hidden">
<div class="a" style="left:1.30px;top:40.20px;width:1121.50px;height:17.70px;background:#cce8ff;border:1px dotted #5a626a"></div>
<div class="a" style="left:35.70px;top:0.00px;width:1.00px;height:290.00px;background:#eaf0fa;"></div>
<div class="a" style="left:156.20px;top:0.00px;width:1.00px;height:290.00px;background:#eaf0fa;"></div>
<div class="a" style="left:277.20px;top:0.00px;width:1.00px;height:290.00px;background:#eaf0fa;"></div>
<div class="a" style="left:639.70px;top:0.00px;width:1.00px;height:290.00px;background:#eaf0fa;"></div>
<div class="a" style="left:748.70px;top:0.00px;width:1.00px;height:290.00px;background:#eaf0fa;"></div>
<div class="a" style="left:857.70px;top:0.00px;width:1.00px;height:290.00px;background:#eaf0fa;"></div>
<div class="a" style="left:989.70px;top:0.00px;width:1.00px;height:290.00px;background:#eaf0fa;"></div>
<div class="a" style="left:1122.10px;top:0.00px;width:1.00px;height:290.00px;background:#eaf0fa;"></div>
<div class="a" style="left:1.30px;top:40.20px;width:1121.50px;height:17.70px;background:rgba(204,232,255,0.85);border:1px dotted #5a626a"></div>
<div class="t" style="left:41.50px;top:3.10px;letter-spacing:-0.112px;">Time</div>
<div class="t" style="left:162.50px;top:3.10px;letter-spacing:-0.154px;">Type</div>
<div class="t" style="left:283.50px;top:3.10px;letter-spacing:-0.214px;">Summary</div>
<div class="t" style="left:645.50px;top:3.10px;letter-spacing:-0.383px;">MAC Src</div>
<div class="t" style="left:754.50px;top:3.10px;letter-spacing:-0.201px;">MAC Dest</div>
<div class="t" style="left:863.50px;top:3.10px;letter-spacing:-0.121px;">Event error status</div>
<div class="t" style="left:996.50px;top:3.10px;letter-spacing:-0.113px;">Event warning status</div>
<div class="t" style="left:41.50px;top:22.78px;letter-spacing:-0.152px;">-0.000427</div>
<div class="t" style="left:162.50px;top:22.78px;letter-spacing:-0.335px;">Packet</div>
<div class="t" style="left:283.50px;top:22.78px;letter-spacing:-0.155px;">BLE LL - Adv Indication</div>
<div class="t" style="left:645.50px;top:22.78px;letter-spacing:-0.682px;">90 FD 9F C8 EF FC</div>
<div class="t" style="left:41.50px;top:41.95px;letter-spacing:-0.272px;">0.000000</div>
<div class="t" style="left:162.50px;top:41.95px;letter-spacing:-0.335px;">Packet</div>
<div class="t" style="left:283.50px;top:41.95px;letter-spacing:-0.142px;">BLE LL - Adv Connect Indication</div>
<div class="t" style="left:645.50px;top:41.95px;letter-spacing:-0.184px;">71 59 93 AC 12 50</div>
<div class="t" style="left:754.50px;top:41.95px;letter-spacing:-0.682px;">90 FD 9F C8 EF FC</div>
<div class="t" style="left:41.50px;top:61.12px;letter-spacing:-0.272px;">0.019468</div>
<div class="t" style="left:162.50px;top:61.12px;letter-spacing:-0.335px;">Packet</div>
<div class="t" style="left:283.50px;top:61.12px;letter-spacing:-0.155px;">BLE LL - Adv Indication</div>
<div class="t" style="left:645.50px;top:61.12px;letter-spacing:-0.224px;">4A EB 84 55 D6 <span style="letter-spacing:-0.85px">...</span></div>
<div class="t" style="left:41.50px;top:80.29px;letter-spacing:-0.272px;">0.028179</div>
<div class="t" style="left:162.50px;top:80.29px;letter-spacing:-0.335px;">Packet</div>
<div class="t" style="left:283.50px;top:80.29px;letter-spacing:-0.155px;">BLE LL - Adv Indication</div>
<div class="t" style="left:645.50px;top:80.29px;letter-spacing:-0.113px;">75 D2 69 28 6D <span style="letter-spacing:-0.85px">...</span></div>
<div class="t" style="left:41.50px;top:99.47px;letter-spacing:-0.272px;">0.028921</div>
<div class="t" style="left:162.50px;top:99.47px;letter-spacing:-0.335px;">Packet</div>
<div class="t" style="left:283.50px;top:99.47px;letter-spacing:-0.400px;">BLE LL - Adv Scan Response</div>
<div class="t" style="left:645.50px;top:99.47px;letter-spacing:-0.113px;">75 D2 69 28 6D <span style="letter-spacing:-0.85px">...</span></div>
<div class="t" style="left:41.50px;top:118.63px;letter-spacing:-0.272px;">0.033497</div>
<div class="t" style="left:162.50px;top:118.63px;letter-spacing:-0.335px;">Packet</div>
<div class="t" style="left:283.50px;top:118.63px;letter-spacing:-0.431px;">BLE LL - Empty PDU</div>
<div class="t" style="left:645.50px;top:118.63px;letter-spacing:-0.184px;">71 59 93 AC 12 50</div>
<div class="t" style="left:754.50px;top:118.63px;letter-spacing:-0.682px;">90 FD 9F C8 EF FC</div>
<div class="t" style="left:41.50px;top:137.80px;letter-spacing:-0.272px;">0.033810</div>
<div class="t" style="left:162.50px;top:137.80px;letter-spacing:-0.335px;">Packet</div>
<div class="t" style="left:283.50px;top:137.80px;letter-spacing:-0.333px;">BLE LL Control: Slave Feature Request</div>
<div class="t" style="left:645.50px;top:137.80px;letter-spacing:-0.682px;">90 FD 9F C8 EF FC</div>
<div class="t" style="left:754.50px;top:137.80px;letter-spacing:-0.184px;">71 59 93 AC 12 50</div>
<div class="t" style="left:41.50px;top:156.98px;letter-spacing:-0.272px;">0.034029</div>
<div class="t" style="left:162.50px;top:156.98px;letter-spacing:-0.335px;">Packet</div>
<div class="t" style="left:283.50px;top:156.98px;letter-spacing:-0.312px;">BLE LL Control: Feature Request</div>
<div class="t" style="left:645.50px;top:156.98px;letter-spacing:-0.184px;">71 59 93 AC 12 50</div>
<div class="t" style="left:754.50px;top:156.98px;letter-spacing:-0.682px;">90 FD 9F C8 EF FC</div>
<div class="t" style="left:41.50px;top:176.14px;letter-spacing:-0.272px;">0.034416</div>
<div class="t" style="left:162.50px;top:176.14px;letter-spacing:-0.335px;">Packet</div>
<div class="t" style="left:283.50px;top:176.14px;letter-spacing:-0.333px;">BLE LL Control: Slave Feature Request</div>
<div class="t" style="left:645.50px;top:176.14px;letter-spacing:-0.682px;">90 FD 9F C8 EF FC</div>
<div class="t" style="left:754.50px;top:176.14px;letter-spacing:-0.184px;">71 59 93 AC 12 50</div>
<div class="t" style="left:996.50px;top:176.14px;letter-spacing:-0.120px;">Retransmitted Packet</div>
<div class="t" style="left:41.50px;top:195.32px;letter-spacing:-0.272px;">0.035234</div>
<div class="t" style="left:162.50px;top:195.32px;letter-spacing:-0.335px;">Packet</div>
<div class="t" style="left:283.50px;top:195.32px;letter-spacing:-0.124px;">Unprovisioned Device Beacon</div>
<div class="t" style="left:645.50px;top:195.32px;letter-spacing:-0.682px;">90 FD 9F C8 EF FC</div>
<div class="t" style="left:41.50px;top:214.49px;letter-spacing:-0.272px;">0.035769</div>
<div class="t" style="left:162.50px;top:214.49px;letter-spacing:-0.335px;">Packet</div>
<div class="t" style="left:283.50px;top:214.49px;letter-spacing:-0.124px;">Unprovisioned Device Beacon</div>
<div class="t" style="left:645.50px;top:214.49px;letter-spacing:-0.682px;">90 FD 9F C8 EF FC</div>
<div class="t" style="left:41.50px;top:233.66px;letter-spacing:-0.272px;">0.036274</div>
<div class="t" style="left:162.50px;top:233.66px;letter-spacing:-0.335px;">Packet</div>
<div class="t" style="left:283.50px;top:233.66px;letter-spacing:-0.124px;">Unprovisioned Device Beacon</div>
<div class="t" style="left:645.50px;top:233.66px;letter-spacing:-0.682px;">90 FD 9F C8 EF FC</div>
<div class="t" style="left:41.50px;top:252.83px;letter-spacing:-0.272px;">0.043502</div>
<div class="t" style="left:162.50px;top:252.83px;letter-spacing:-0.335px;">Packet</div>
<div class="t" style="left:283.50px;top:252.83px;letter-spacing:-0.155px;">BLE LL - Adv Indication</div>
<div class="t" style="left:645.50px;top:252.83px;letter-spacing:-0.213px;">4B 76 31 93 70 78</div>
<div class="t" style="left:41.50px;top:272.00px;letter-spacing:-0.272px;">0.081099</div>
<div class="t" style="left:162.50px;top:272.00px;letter-spacing:-0.335px;">Packet</div>
<div class="t" style="left:283.50px;top:272.00px;letter-spacing:-0.124px;">Unprovisioned Device Beacon</div>
<div class="t" style="left:645.50px;top:272.00px;letter-spacing:-0.446px;">90 FD 9F C8 F0 19</div>
<div class="a" style="left:4.00px;top:44.20px;width:13.00px;height:9.80px;background:#d4e8f8;border:2px solid #1a9ab6"></div>
<div class="a" style="left:15.20px;top:38.00px;width:952.60px;height:20.40px;background:transparent;border:2.5px solid #ff0808;border-radius:6px;box-shadow:0 0 5px 1px rgba(0,0,0,0.2), inset 0 3px 5px 0 rgba(50,80,120,0.3)"></div>
</div>
<svg class="a" style="left:8.5px;top:851px" width="16" height="16" viewBox="0 0 16 16"><g fill="none" stroke="#5a8cac" stroke-width="1"><circle cx="5.4" cy="10.2" r="4.1"/><circle cx="9.6" cy="5.6" r="4.1"/></g><path d="M5.4 7.6 V10.4 H7.4 M9.6 3.2 V6 H11.6" fill="none" stroke="#4a74c4" stroke-width="0.9"/></svg>
<div class="a" style="left:1218px;top:829px;width:16px;height:284px;background:#f0f0f0;"></div>
<div class="a" style="left:1218px;top:856px;width:15px;height:16px;background:#cdcdcd;"></div>
<svg class="a" style="left:1220.5px;top:834px" width="10" height="8" viewBox="0 0 10 8"><path d="M1.4 6 L5 2.2 L8.6 6" fill="none" stroke="#505050" stroke-width="1.6"/></svg>
<svg class="a" style="left:1220.7px;top:1099.4px" width="10" height="8" viewBox="0 0 10 8"><path d="M1.4 2 L5 5.8 L8.6 2" fill="none" stroke="#404040" stroke-width="1.6"/></svg>
<div class="a" style="left:5px;top:1112.4px;width:1230px;height:1.1px;background:#b4bac4;"></div>
<div class="a" style="left:5px;top:1113.5px;width:1230px;height:2px;background:#fff;"></div>
</body></html>
